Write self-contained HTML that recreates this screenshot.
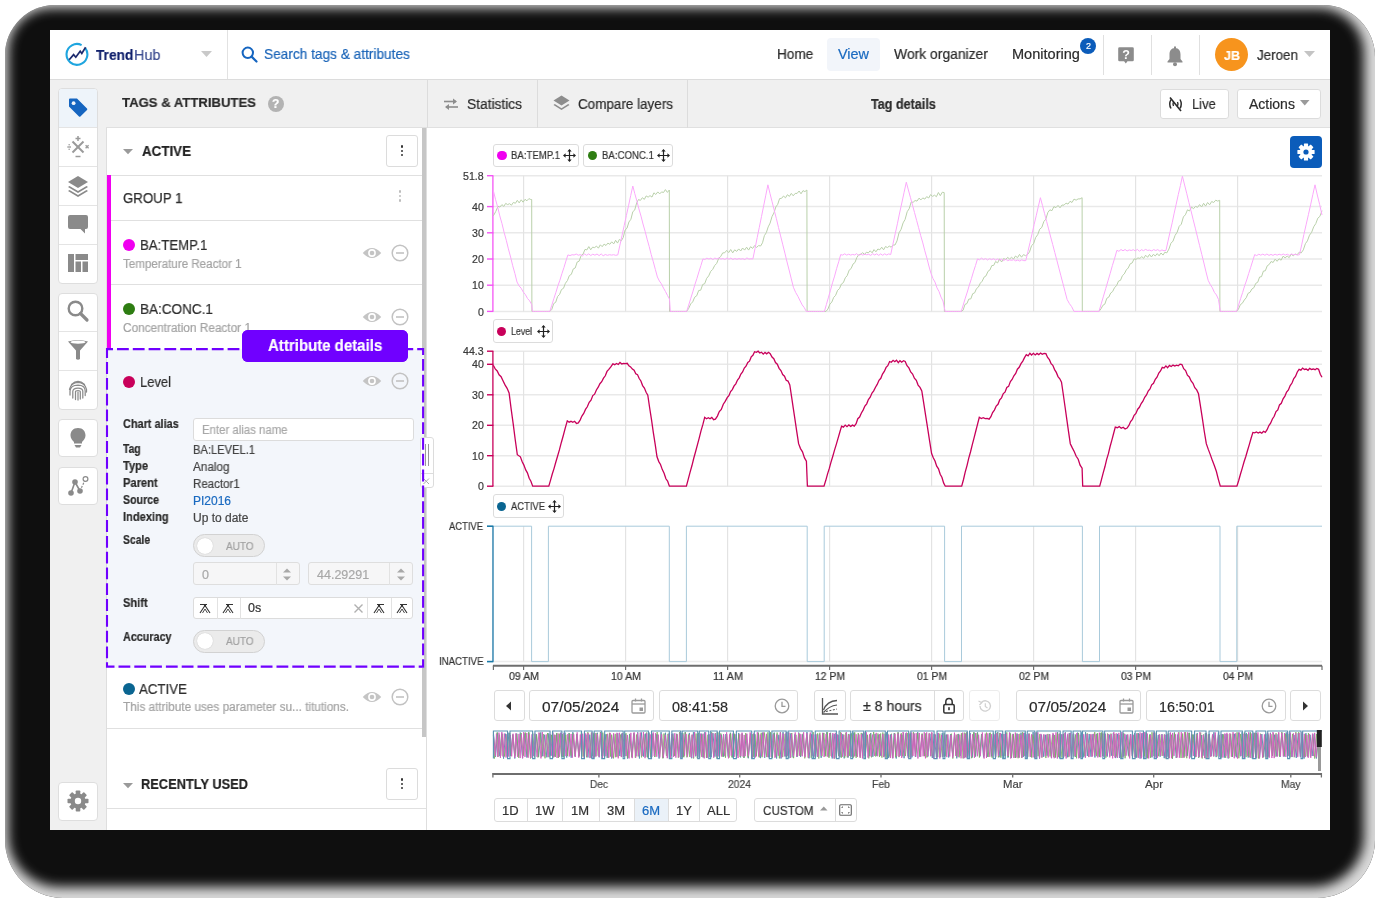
<!DOCTYPE html><html><head><meta charset="utf-8"><style>
html,body{margin:0;padding:0;}
body{width:1380px;height:900px;position:relative;overflow:hidden;background:#fff;font-family:"Liberation Sans",sans-serif;}
.a{position:absolute;box-sizing:border-box;}
.t{position:absolute;white-space:nowrap;transform-origin:0 0;-webkit-text-stroke:0.2px currentColor;will-change:transform;}
</style></head><body>
<div class="a" style="left:5px;top:4.5px;width:1370.2px;height:893px;border-radius:50px 52px 58px 58px;background:#0f0f0f;box-shadow:inset -4px -4px 12px 7px rgba(255,255,255,0.85);"></div>
<div class="a" style="left:50px;top:30px;width:1280px;height:800px;background:#fff;"></div>
<div class="a" style="left:50px;top:79px;width:1280px;height:1px;background:#dcdcdc;"></div>
<div class="a" style="left:227px;top:30px;width:1px;height:49px;background:#e2e2e2;"></div>
<svg class="a" style="left:64px;top:42px;" width="26" height="26" viewBox="0 0 26 26"><path d="M21.3 6.2 A10.4 10.4 0 1 1 17.6 3.1" fill="none" stroke="#1ea5df" stroke-width="2.1"/><polyline points="5.2,17.8 9.6,12.6 11.8,15.2 16.2,9.2 17.8,11.4 21.6,5.2" fill="none" stroke="#1c2a6e" stroke-width="1.7" stroke-linejoin="miter"/></svg>
<div class="t" style="left:95.50px;top:47.18px;font-size:15.5px;line-height:15.5px;color:#0f1f6b;font-weight:bold;transform:scaleX(0.8838);">Trend</div>
<div class="t" style="left:133.50px;top:47.18px;font-size:15.5px;line-height:15.5px;color:#3a4a8f;transform:scaleX(0.9319);">Hub</div>
<svg class="a" style="left:201px;top:51px;" width="12" height="7" viewBox="0 0 12 7"><polygon points="0,0 11,0 5.5,6" fill="#c9c9c9"/></svg>
<svg class="a" style="left:241px;top:46px;" width="18" height="18" viewBox="0 0 18 18"><circle cx="6.8" cy="6.8" r="5.2" fill="none" stroke="#1565c0" stroke-width="2"/><line x1="10.6" y1="10.6" x2="15.5" y2="15.5" stroke="#1565c0" stroke-width="2.2" stroke-linecap="round"/></svg>
<div class="t" style="left:264.00px;top:47.18px;font-size:14.2px;line-height:14.2px;color:#1a64b8;transform:scaleX(0.9634);">Search tags &amp; attributes</div>
<div class="t" style="left:777.40px;top:46.98px;font-size:14.2px;line-height:14.2px;color:#2b2b2b;transform:scaleX(0.9557);">Home</div>
<div class="a" style="left:827px;top:38px;width:53px;height:33px;background:#f2f5fa;border-radius:4px;"></div>
<div class="t" style="left:838.30px;top:46.98px;font-size:14.2px;line-height:14.2px;color:#1a6ac0;transform:scaleX(1.0156);">View</div>
<div class="t" style="left:893.60px;top:46.98px;font-size:14.2px;line-height:14.2px;color:#2b2b2b;transform:scaleX(0.9790);">Work organizer</div>
<div class="t" style="left:1012.00px;top:46.98px;font-size:14.2px;line-height:14.2px;color:#2b2b2b;transform:scaleX(1.0256);">Monitoring</div>
<div class="a" style="left:1080px;top:38px;width:16px;height:16px;background:#0b5cba;border-radius:50%;"></div>
<div class="t" style="left:1085.50px;top:42.38px;font-size:9px;line-height:9px;color:#fff;">2</div>
<div class="a" style="left:1103px;top:35px;width:1px;height:40px;background:#e0e0e0;"></div>
<div class="a" style="left:1151px;top:35px;width:1px;height:40px;background:#e0e0e0;"></div>
<div class="a" style="left:1199px;top:35px;width:1px;height:40px;background:#e0e0e0;"></div>
<svg class="a" style="left:1117px;top:46px;" width="18" height="20" viewBox="0 0 18 20"><path d="M2.5 1.2 H15.5 Q16.8 1.2 16.8 2.5 V14 Q16.8 15.3 15.5 15.3 H10.5 L8.8 17.6 L7.1 15.3 H2.5 Q1.2 15.3 1.2 14 V2.5 Q1.2 1.2 2.5 1.2 Z" fill="#8c8c8c"/><text x="9" y="13" font-family="Liberation Sans" font-weight="bold" font-size="12.5" fill="#fff" text-anchor="middle">?</text></svg>
<svg class="a" style="left:1165px;top:45.5px;" width="20" height="21" viewBox="0 0 20 21"><path d="M10 2 C6 2 4.5 5 4.5 8.5 V13 L2.5 15.5 V16.5 H17.5 V15.5 L15.5 13 V8.5 C15.5 5 14 2 10 2 Z" fill="#8c8c8c"/><circle cx="10" cy="18.3" r="2" fill="#8c8c8c"/><rect x="9" y="0.5" width="2" height="2.5" fill="#8c8c8c"/></svg>
<div class="a" style="left:1215px;top:38px;width:33px;height:33px;background:#f7941d;border-radius:50%;"></div>
<div class="t" style="left:1223.50px;top:48.57px;font-size:13.5px;line-height:13.5px;color:#fff;font-weight:bold;transform:scaleX(0.9271);">JB</div>
<div class="t" style="left:1257.00px;top:48.28px;font-size:14.2px;line-height:14.2px;color:#2b2b2b;transform:scaleX(0.9443);">Jeroen</div>
<svg class="a" style="left:1304px;top:51px;" width="12" height="7" viewBox="0 0 12 7"><polygon points="0,0 11,0 5.5,6" fill="#c4c4c4"/></svg>
<div class="a" style="left:50px;top:80px;width:1280px;height:750px;background:#f0f0f0;"></div>
<div class="a" style="left:106px;top:127px;width:1224px;height:1px;background:#e0e0e0;"></div>
<div class="a" style="left:58px;top:88px;width:39.5px;height:195.5px;background:#fff;border:1px solid #dedede;border-radius:4px;"></div>
<div class="a" style="left:59px;top:89px;width:37.5px;height:38px;background:#eef4fa;border-radius:3px 3px 0 0;"></div>
<div class="a" style="left:59px;top:127px;width:38px;height:1px;background:#e4e4e4;"></div>
<div class="a" style="left:59px;top:166px;width:38px;height:1px;background:#e4e4e4;"></div>
<div class="a" style="left:59px;top:205px;width:38px;height:1px;background:#e4e4e4;"></div>
<div class="a" style="left:59px;top:244px;width:38px;height:1px;background:#e4e4e4;"></div>
<div class="a" style="left:58px;top:292.5px;width:39.5px;height:117px;background:#fff;border:1px solid #dedede;border-radius:4px;"></div>
<div class="a" style="left:59px;top:331px;width:38px;height:1px;background:#e4e4e4;"></div>
<div class="a" style="left:59px;top:370px;width:38px;height:1px;background:#e4e4e4;"></div>
<div class="a" style="left:58px;top:418.7px;width:39.5px;height:38.8px;background:#fff;border:1px solid #dedede;border-radius:4px;"></div>
<div class="a" style="left:58px;top:466.7px;width:39.5px;height:38.8px;background:#fff;border:1px solid #dedede;border-radius:4px;"></div>
<div class="a" style="left:58px;top:782.2px;width:39.5px;height:38.4px;background:#fff;border:1px solid #dedede;border-radius:4px;"></div>
<svg class="a" style="left:66px;top:96px;" width="24" height="24" viewBox="0 0 24 24"><path d="M3 3.5 Q3 2.5 4 2.5 H11 L21 12.5 Q21.7 13.2 21 13.9 L14.4 20.5 Q13.7 21.2 13 20.5 L3 10.5 Z" fill="#1565c0"/><circle cx="7.6" cy="7.2" r="1.9" fill="#eef4fa"/></svg>
<svg class="a" style="left:66px;top:135px;" width="24" height="24" viewBox="0 0 24 24"><line x1="6.5" y1="6.5" x2="17.5" y2="17.5" stroke="#9a9a9a" stroke-width="2"/><line x1="17.5" y1="6.5" x2="6.5" y2="17.5" stroke="#9a9a9a" stroke-width="2"/><path d="M12 1 V6 M9.5 3.5 H14.5" stroke="#9a9a9a" stroke-width="1.5"/><path d="M9.5 21.5 H14.5" stroke="#9a9a9a" stroke-width="1.5"/><path d="M1.3 12 H5" stroke="#9a9a9a" stroke-width="1.3"/><circle cx="3.15" cy="9.7" r="0.8" fill="#9a9a9a"/><circle cx="3.15" cy="14.3" r="0.8" fill="#9a9a9a"/><path d="M19.6 10.3 L22.6 13.3 M22.6 10.3 L19.6 13.3" stroke="#9a9a9a" stroke-width="1.3"/></svg>
<svg class="a" style="left:66px;top:174px;" width="24" height="24" viewBox="0 0 24 24"><path d="M12 2 L22 8 L12 14 L2 8 Z" fill="#8a8a8a"/><path d="M3.5 12 L2 13 L12 19 L22 13 L20.5 12 L12 17 Z" fill="#8a8a8a"/><path d="M3.5 16 L2 17 L12 23 L22 17 L20.5 16 L12 21 Z" fill="#8a8a8a"/></svg>
<svg class="a" style="left:66px;top:212px;" width="24" height="24" viewBox="0 0 24 24"><path d="M4 3 H20 Q22 3 22 5 V15 Q22 17 20 17 H19 V21.5 L14.5 17 H4 Q2 17 2 15 V5 Q2 3 4 3 Z" fill="#8a8a8a"/></svg>
<svg class="a" style="left:66px;top:251px;" width="24" height="24" viewBox="0 0 24 24"><rect x="2" y="3" width="6" height="18" fill="#8a8a8a"/><rect x="9.5" y="3" width="12.5" height="6" fill="#8a8a8a"/><rect x="9.5" y="10.5" width="5.5" height="10.5" fill="#8a8a8a"/><rect x="16.5" y="10.5" width="5.5" height="10.5" fill="#8a8a8a"/></svg>
<svg class="a" style="left:66px;top:299px;" width="24" height="24" viewBox="0 0 24 24"><circle cx="9.5" cy="9.5" r="6.8" fill="none" stroke="#8a8a8a" stroke-width="2.4"/><line x1="14.5" y1="14.5" x2="21" y2="21" stroke="#8a8a8a" stroke-width="3.2" stroke-linecap="round"/></svg>
<svg class="a" style="left:66px;top:338px;" width="24" height="24" viewBox="0 0 24 24"><path d="M2 3.5 Q12 0.5 22 3.5 L14 12.5 V21 Q12 22.5 10 21 V12.5 Z" fill="#8a8a8a"/><ellipse cx="12" cy="4.2" rx="7.5" ry="1.6" fill="#fff"/></svg>
<svg class="a" style="left:66px;top:378px;" width="24" height="24" viewBox="0 0 24 24"><path d="M5.5 6.5 Q12 0.5 18.5 6.5" fill="none" stroke="#8a8a8a" stroke-width="1.25" stroke-linecap="round"/><path d="M3.5 11.5 Q5 4.5 12 4.3 Q19 4.5 20.5 11.5 V14" fill="none" stroke="#8a8a8a" stroke-width="1.25" stroke-linecap="round"/><path d="M4 17 V13 Q4.5 7.3 12 7.2 Q19.3 7.3 19.2 13 V17.5" fill="none" stroke="#8a8a8a" stroke-width="1.25" stroke-linecap="round"/><path d="M6.8 20 V13.2 Q7 10 12 10 Q16.8 10 16.8 13.2 V20" fill="none" stroke="#8a8a8a" stroke-width="1.25" stroke-linecap="round"/><path d="M9.5 21.5 V13.5 Q9.5 12.5 12 12.5 Q14.3 12.5 14.3 13.5 V21" fill="none" stroke="#8a8a8a" stroke-width="1.25" stroke-linecap="round"/><path d="M12 14 V22" fill="none" stroke="#8a8a8a" stroke-width="1.25" stroke-linecap="round"/></svg>
<svg class="a" style="left:66px;top:426px;" width="24" height="24" viewBox="0 0 24 24"><path d="M12 2 C7 2 4.5 5.5 4.5 9.5 C4.5 12.5 6.5 14.5 8 16 V17.5 H16 V16 C17.5 14.5 19.5 12.5 19.5 9.5 C19.5 5.5 17 2 12 2 Z" fill="#8a8a8a"/><path d="M8.5 19 H15.5 L14 21.5 H10 Z" fill="#8a8a8a"/></svg>
<svg class="a" style="left:66px;top:474px;" width="24" height="24" viewBox="0 0 24 24"><line x1="5" y1="19" x2="9" y2="8" stroke="#8a8a8a" stroke-width="1.6"/><line x1="9" y1="8" x2="14" y2="17" stroke="#8a8a8a" stroke-width="1.6"/><line x1="14" y1="17" x2="19" y2="6" stroke="#8a8a8a" stroke-width="1.2" stroke-dasharray="2 1.5"/><circle cx="5" cy="19" r="2.8" fill="#8a8a8a"/><circle cx="9" cy="8" r="2.8" fill="#8a8a8a"/><circle cx="14" cy="17" r="2.8" fill="#8a8a8a"/><circle cx="19.5" cy="5" r="2.4" fill="#fff" stroke="#8a8a8a" stroke-width="1.2"/></svg>
<svg class="a" style="left:66px;top:789px;" width="24" height="24" viewBox="0 0 24 24"><g transform="translate(12 12)"><rect x="-2.3" y="-10.5" width="4.6" height="5" rx="0.8" fill="#8a8a8a" transform="rotate(0)"/><rect x="-2.3" y="-10.5" width="4.6" height="5" rx="0.8" fill="#8a8a8a" transform="rotate(45)"/><rect x="-2.3" y="-10.5" width="4.6" height="5" rx="0.8" fill="#8a8a8a" transform="rotate(90)"/><rect x="-2.3" y="-10.5" width="4.6" height="5" rx="0.8" fill="#8a8a8a" transform="rotate(135)"/><rect x="-2.3" y="-10.5" width="4.6" height="5" rx="0.8" fill="#8a8a8a" transform="rotate(180)"/><rect x="-2.3" y="-10.5" width="4.6" height="5" rx="0.8" fill="#8a8a8a" transform="rotate(225)"/><rect x="-2.3" y="-10.5" width="4.6" height="5" rx="0.8" fill="#8a8a8a" transform="rotate(270)"/><rect x="-2.3" y="-10.5" width="4.6" height="5" rx="0.8" fill="#8a8a8a" transform="rotate(315)"/><circle r="7.6" fill="#8a8a8a"/><circle r="3.2" fill="#fff"/></g></svg>
<div class="t" style="left:122.40px;top:96.44px;font-size:13.3px;line-height:13.3px;color:#2a2a2a;font-weight:bold;transform:scaleX(0.9874);">TAGS &amp; ATTRIBUTES</div>
<div class="a" style="left:267.5px;top:96px;width:16px;height:16px;background:#b3b3b3;border-radius:50%;"></div>
<div class="t" style="left:271.83px;top:98.24px;font-size:12px;line-height:12px;color:#fff;font-weight:bold;">?</div>
<div class="a" style="left:106px;top:127.5px;width:321px;height:702.5px;background:#fff;border-left:1px solid #dedede;border-right:1px solid #dedede;"></div>
<div class="a" style="left:422px;top:128px;width:4px;height:609px;background:#c6c6c6;"></div>
<div class="a" style="left:426.5px;top:80px;width:1px;height:48px;background:#dcdcdc;"></div>
<div class="a" style="left:537px;top:80px;width:1px;height:48px;background:#dcdcdc;"></div>
<div class="a" style="left:687px;top:80px;width:1px;height:48px;background:#dcdcdc;"></div>
<svg class="a" style="left:442px;top:96px;" width="18" height="16" viewBox="0 0 18 16"><path d="M2 5.5 H14" stroke="#8d8d8d" stroke-width="1.6"/><path d="M11 2.5 L15 5.5 L11 8.5 Z" fill="#8d8d8d"/><path d="M16 11 H4" stroke="#8d8d8d" stroke-width="1.6"/><path d="M7 8 L3 11 L7 14 Z" fill="#8d8d8d"/></svg>
<div class="t" style="left:467.30px;top:97.15px;font-size:14px;line-height:14px;color:#2b2b2b;transform:scaleX(0.9819);">Statistics</div>
<svg class="a" style="left:552px;top:94px;" width="19" height="19" viewBox="0 0 19 19"><path d="M9.5 1.5 L17.5 6.5 L9.5 11.5 L1.5 6.5 Z" fill="#8d8d8d"/><path d="M2.8 10 L1.5 11 L9.5 16 L17.5 11 L16.2 10 L9.5 14.2 Z" fill="#8d8d8d"/></svg>
<div class="t" style="left:577.90px;top:97.15px;font-size:14px;line-height:14px;color:#2b2b2b;transform:scaleX(0.9614);">Compare layers</div>
<div class="t" style="left:870.60px;top:96.75px;font-size:14px;line-height:14px;color:#2b2b2b;font-weight:bold;transform:scaleX(0.8988);">Tag details</div>
<div class="a" style="left:1159.7px;top:88.8px;width:69.5px;height:30.5px;background:#fff;border:1px solid #dcdcdc;border-radius:3px;"></div>
<svg class="a" style="left:1167px;top:96px;" width="17" height="17" viewBox="0 0 17 17"><path d="M4 3.5 Q1.5 8 4 12.5" fill="none" stroke="#2b2b2b" stroke-width="1.5"/><path d="M13 3.5 Q15.5 8 13 12.5" fill="none" stroke="#2b2b2b" stroke-width="1.5"/><path d="M6.5 6 Q5.5 8 6.5 10" fill="none" stroke="#2b2b2b" stroke-width="1.4"/><path d="M10.5 6 Q11.5 8 10.5 10" fill="none" stroke="#2b2b2b" stroke-width="1.4"/><line x1="3" y1="1.5" x2="14" y2="15" stroke="#2b2b2b" stroke-width="1.6"/></svg>
<div class="t" style="left:1192.30px;top:96.85px;font-size:14px;line-height:14px;color:#2b2b2b;transform:scaleX(0.9228);">Live</div>
<div class="a" style="left:1236.8px;top:88.8px;width:84.4px;height:30.5px;background:#fff;border:1px solid #dcdcdc;border-radius:3px;"></div>
<div class="t" style="left:1248.80px;top:96.85px;font-size:14px;line-height:14px;color:#2b2b2b;">Actions</div>
<svg class="a" style="left:1300px;top:100px;" width="10" height="7" viewBox="0 0 10 7"><polygon points="0,0 9.5,0 4.75,5.5" fill="#9a9a9a"/></svg>
<div class="a" style="left:427px;top:128px;width:903px;height:702px;background:#fff;"></div>
<div class="a" style="left:1290px;top:136px;width:31.7px;height:31.5px;background:#0b5cba;border-radius:4px;"></div>
<svg class="a" style="left:1290px;top:136px;" width="32" height="32" viewBox="0 0 32 32"><g transform="translate(16 16)"><rect x="-2.1" y="-8.6" width="4.2" height="4.5" rx="0.6" fill="#fff" transform="rotate(0)"/><rect x="-2.1" y="-8.6" width="4.2" height="4.5" rx="0.6" fill="#fff" transform="rotate(45)"/><rect x="-2.1" y="-8.6" width="4.2" height="4.5" rx="0.6" fill="#fff" transform="rotate(90)"/><rect x="-2.1" y="-8.6" width="4.2" height="4.5" rx="0.6" fill="#fff" transform="rotate(135)"/><rect x="-2.1" y="-8.6" width="4.2" height="4.5" rx="0.6" fill="#fff" transform="rotate(180)"/><rect x="-2.1" y="-8.6" width="4.2" height="4.5" rx="0.6" fill="#fff" transform="rotate(225)"/><rect x="-2.1" y="-8.6" width="4.2" height="4.5" rx="0.6" fill="#fff" transform="rotate(270)"/><rect x="-2.1" y="-8.6" width="4.2" height="4.5" rx="0.6" fill="#fff" transform="rotate(315)"/><circle r="6.2" fill="#fff"/><circle r="2.6" fill="#0b5cba"/></g></svg>
<svg class="a" style="left:123px;top:149px;" width="11" height="6" viewBox="0 0 11 6"><polygon points="0,0 10,0 5,5.2" fill="#9a9a9a"/></svg>
<div class="t" style="left:141.50px;top:144.00px;font-size:14.3px;line-height:14.3px;color:#232323;font-weight:bold;transform:scaleX(0.9344);">ACTIVE</div>
<div class="a" style="left:386.3px;top:135.2px;width:31.5px;height:31.5px;background:#fff;border:1px solid #dcdcdc;border-radius:3px;"></div>
<div class="a" style="left:400.6px;top:145.1px;width:2.6px;height:2.6px;background:#333;border-radius:50%;"></div>
<div class="a" style="left:400.6px;top:149.5px;width:2.6px;height:2.6px;background:#333;border-radius:50%;"></div>
<div class="a" style="left:400.6px;top:153.9px;width:2.6px;height:2.6px;background:#333;border-radius:50%;"></div>
<div class="a" style="left:107px;top:174.5px;width:315px;height:1px;background:#e0e0e0;"></div>
<div class="a" style="left:107px;top:175px;width:3.8px;height:173px;background:#f000f0;"></div>
<div class="t" style="left:123.10px;top:191.00px;font-size:14.3px;line-height:14.3px;color:#2d2d2d;transform:scaleX(0.9266);font-weight:500;-webkit-text-stroke:0.25px #2d2d2d;">GROUP 1</div>
<div class="a" style="left:398.7px;top:190.3px;width:2.6px;height:2.6px;background:#bdbdbd;border-radius:50%;"></div>
<div class="a" style="left:398.7px;top:194.8px;width:2.6px;height:2.6px;background:#bdbdbd;border-radius:50%;"></div>
<div class="a" style="left:398.7px;top:199.3px;width:2.6px;height:2.6px;background:#bdbdbd;border-radius:50%;"></div>
<div class="a" style="left:111px;top:220px;width:311px;height:1px;background:#e0e0e0;"></div>
<div class="a" style="left:122.7px;top:238.9px;width:12px;height:12px;background:#f000f0;border-radius:50%;"></div>
<div class="t" style="left:139.50px;top:238.20px;font-size:14.3px;line-height:14.3px;color:#2d2d2d;transform:scaleX(0.9237);">BA:TEMP.1</div>
<div class="t" style="left:123.10px;top:257.74px;font-size:12px;line-height:12px;color:#a3a3a3;transform:scaleX(0.9664);">Temperature Reactor 1</div>
<svg class="a" style="left:362px;top:245.8px;" width="20" height="14" viewBox="0 0 20 14"><path d="M0.8 7 Q10 -3.2 19.2 7 Q10 17.2 0.8 7 Z" fill="#c4c4c4"/><circle cx="10" cy="7" r="3.9" fill="#fff"/><circle cx="10" cy="7" r="2.3" fill="#c4c4c4"/></svg>
<svg class="a" style="left:390.9px;top:243.8px;" width="18" height="18" viewBox="0 0 18 18"><circle cx="9" cy="9" r="7.8" fill="none" stroke="#c2c2c2" stroke-width="1.5"/><line x1="5" y1="9" x2="13" y2="9" stroke="#c2c2c2" stroke-width="1.6"/></svg>
<div class="a" style="left:111px;top:284px;width:311px;height:1px;background:#e0e0e0;"></div>
<div class="a" style="left:122.7px;top:303px;width:12px;height:12px;background:#2e7d12;border-radius:50%;"></div>
<div class="t" style="left:139.50px;top:302.30px;font-size:14.3px;line-height:14.3px;color:#2d2d2d;transform:scaleX(0.9471);">BA:CONC.1</div>
<div class="t" style="left:123.10px;top:321.54px;font-size:12px;line-height:12px;color:#a3a3a3;transform:scaleX(0.9840);">Concentration Reactor 1</div>
<svg class="a" style="left:362px;top:309.8px;" width="20" height="14" viewBox="0 0 20 14"><path d="M0.8 7 Q10 -3.2 19.2 7 Q10 17.2 0.8 7 Z" fill="#c4c4c4"/><circle cx="10" cy="7" r="3.9" fill="#fff"/><circle cx="10" cy="7" r="2.3" fill="#c4c4c4"/></svg>
<svg class="a" style="left:390.9px;top:307.8px;" width="18" height="18" viewBox="0 0 18 18"><circle cx="9" cy="9" r="7.8" fill="none" stroke="#c2c2c2" stroke-width="1.5"/><line x1="5" y1="9" x2="13" y2="9" stroke="#c2c2c2" stroke-width="1.6"/></svg>
<div class="a" style="left:106.5px;top:348.5px;width:317.5px;height:319.5px;background:#f3f6fb;"></div>
<div class="a" style="left:241.8px;top:329.8px;width:166.2px;height:32.2px;background:#7000ff;border-radius:6px;"></div>
<div class="t" style="left:268.00px;top:338.46px;font-size:16px;line-height:16px;color:#fff;font-weight:bold;transform:scaleX(0.9377);">Attribute details</div>
<div class="a" style="left:122.9px;top:375.9px;width:12px;height:12px;background:#c8005a;border-radius:50%;"></div>
<div class="t" style="left:139.50px;top:374.60px;font-size:14.3px;line-height:14.3px;color:#2d2d2d;transform:scaleX(0.9068);">Level</div>
<svg class="a" style="left:361.9px;top:374.2px;" width="20" height="14" viewBox="0 0 20 14"><path d="M0.8 7 Q10 -3.2 19.2 7 Q10 17.2 0.8 7 Z" fill="#c4c4c4"/><circle cx="10" cy="7" r="3.9" fill="#fff"/><circle cx="10" cy="7" r="2.3" fill="#c4c4c4"/></svg>
<svg class="a" style="left:390.9px;top:372.2px;" width="18" height="18" viewBox="0 0 18 18"><circle cx="9" cy="9" r="7.8" fill="none" stroke="#c2c2c2" stroke-width="1.5"/><line x1="5" y1="9" x2="13" y2="9" stroke="#c2c2c2" stroke-width="1.6"/></svg>
<div class="t" style="left:123.20px;top:418.34px;font-size:12px;line-height:12px;color:#2a2a2a;font-weight:bold;transform:scaleX(0.9078);">Chart alias</div>
<div class="a" style="left:193.3px;top:417.5px;width:220.4px;height:23px;background:#fff;border:1px solid #dcdcdc;border-radius:3px;"></div>
<div class="t" style="left:202.30px;top:423.64px;font-size:12px;line-height:12px;color:#a8a8a8;transform:scaleX(0.9495);">Enter alias name</div>
<div class="t" style="left:123.40px;top:443.44px;font-size:12px;line-height:12px;color:#2a2a2a;font-weight:bold;transform:scaleX(0.8658);">Tag</div>
<div class="t" style="left:193.10px;top:443.84px;font-size:12px;line-height:12px;color:#444;transform:scaleX(0.9294);">BA:LEVEL.1</div>
<div class="t" style="left:123.40px;top:460.44px;font-size:12px;line-height:12px;color:#2a2a2a;font-weight:bold;transform:scaleX(0.9256);">Type</div>
<div class="t" style="left:193.10px;top:460.84px;font-size:12px;line-height:12px;color:#444;transform:scaleX(0.9768);">Analog</div>
<div class="t" style="left:123.40px;top:477.44px;font-size:12px;line-height:12px;color:#2a2a2a;font-weight:bold;transform:scaleX(0.9291);">Parent</div>
<div class="t" style="left:193.10px;top:477.84px;font-size:12px;line-height:12px;color:#444;transform:scaleX(0.9611);">Reactor1</div>
<div class="t" style="left:123.40px;top:494.44px;font-size:12px;line-height:12px;color:#2a2a2a;font-weight:bold;transform:scaleX(0.8849);">Source</div>
<div class="t" style="left:193.10px;top:494.84px;font-size:12px;line-height:12px;color:#1a6ac0;">PI2016</div>
<div class="t" style="left:123.40px;top:511.44px;font-size:12px;line-height:12px;color:#2a2a2a;font-weight:bold;transform:scaleX(0.9243);">Indexing</div>
<div class="t" style="left:193.10px;top:511.84px;font-size:12px;line-height:12px;color:#444;">Up to date</div>
<div class="t" style="left:123.40px;top:534.44px;font-size:12px;line-height:12px;color:#2a2a2a;font-weight:bold;transform:scaleX(0.8641);">Scale</div>
<div class="a" style="left:193.1px;top:534.3px;width:71.5px;height:23.1px;background:#ebebeb;border:1px solid #d2d2d2;border-radius:12px;"></div>
<div class="a" style="left:196.6px;top:537.5px;width:16.7px;height:16.7px;background:#fff;border-radius:50%;box-shadow:0 0 1px rgba(0,0,0,0.25);"></div>
<div class="t" style="left:226.40px;top:540.99px;font-size:11px;line-height:11px;color:#a0a0a0;transform:scaleX(0.9091);">AUTO</div>
<div class="a" style="left:193.1px;top:562.4px;width:106.5px;height:23.1px;background:#f6f6f7;border:1px solid #dedede;border-radius:3px;"></div>
<div class="a" style="left:275.6px;top:563px;width:1px;height:22px;background:#e2e2e2;"></div>
<svg class="a" style="left:282.3px;top:567.5px;" width="10" height="13" viewBox="0 0 10 13"><polygon points="0,4.5 8,4.5 4,0.5" fill="#a8a8a8" transform="translate(1 0)"/><polygon points="0,8.5 8,8.5 4,12.5" fill="#a8a8a8" transform="translate(1 0)"/></svg>
<div class="t" style="left:201.70px;top:568.52px;font-size:12.5px;line-height:12.5px;color:#a8a8a8;">0</div>
<div class="a" style="left:308.4px;top:562.4px;width:105px;height:23.1px;background:#f6f6f7;border:1px solid #dedede;border-radius:3px;"></div>
<div class="a" style="left:389.4px;top:563px;width:1px;height:22px;background:#e2e2e2;"></div>
<svg class="a" style="left:396.09999999999997px;top:567.5px;" width="10" height="13" viewBox="0 0 10 13"><polygon points="0,4.5 8,4.5 4,0.5" fill="#a8a8a8" transform="translate(1 0)"/><polygon points="0,8.5 8,8.5 4,12.5" fill="#a8a8a8" transform="translate(1 0)"/></svg>
<div class="t" style="left:317.00px;top:568.52px;font-size:12.5px;line-height:12.5px;color:#a8a8a8;">44.29291</div>
<div class="t" style="left:123.40px;top:596.54px;font-size:12px;line-height:12px;color:#2a2a2a;font-weight:bold;transform:scaleX(0.9227);">Shift</div>
<div class="a" style="left:193.1px;top:596.9px;width:220.3px;height:22.6px;background:#fff;border:1px solid #dcdcdc;border-radius:3px;"></div>
<div class="a" style="left:216.5px;top:597.5px;width:1px;height:21.5px;background:#e2e2e2;"></div>
<div class="a" style="left:239.7px;top:597.5px;width:1px;height:21.5px;background:#e2e2e2;"></div>
<div class="a" style="left:367.3px;top:597.5px;width:1px;height:21.5px;background:#e2e2e2;"></div>
<div class="a" style="left:390.7px;top:597.5px;width:1px;height:21.5px;background:#e2e2e2;"></div>
<svg class="a" style="left:197.8px;top:602px;" width="14" height="12" viewBox="0 0 14 12"><path d="M2 11 L7 3.5 L12 11" fill="none" stroke="#333" stroke-width="1.1"/><path d="M4.5 11 L7 7 L9.5 11" fill="none" stroke="#333" stroke-width="0.9"/><circle cx="7" cy="3.5" r="1.1" fill="#333"/><path d="M2 2.5 H9" stroke="#333" stroke-width="1"/></svg>
<svg class="a" style="left:221.1px;top:602px;" width="14" height="12" viewBox="0 0 14 12"><path d="M2 11 L7 3.5 L12 11" fill="none" stroke="#333" stroke-width="1.1"/><path d="M4.5 11 L7 7 L9.5 11" fill="none" stroke="#333" stroke-width="0.9"/><circle cx="7" cy="3.5" r="1.1" fill="#333"/><path d="M5 2.5 H12" stroke="#333" stroke-width="1"/></svg>
<svg class="a" style="left:372px;top:602px;" width="14" height="12" viewBox="0 0 14 12"><path d="M2 11 L7 3.5 L12 11" fill="none" stroke="#333" stroke-width="1.1"/><path d="M4.5 11 L7 7 L9.5 11" fill="none" stroke="#333" stroke-width="0.9"/><circle cx="7" cy="3.5" r="1.1" fill="#333"/><path d="M5 2.5 H12" stroke="#333" stroke-width="1"/></svg>
<svg class="a" style="left:395px;top:602px;" width="14" height="12" viewBox="0 0 14 12"><path d="M2 11 L7 3.5 L12 11" fill="none" stroke="#333" stroke-width="1.1"/><path d="M4.5 11 L7 7 L9.5 11" fill="none" stroke="#333" stroke-width="0.9"/><circle cx="7" cy="3.5" r="1.1" fill="#333"/><path d="M5 2.5 H12" stroke="#333" stroke-width="1"/></svg>
<div class="t" style="left:247.80px;top:602.32px;font-size:12.5px;line-height:12.5px;color:#333;">0s</div>
<svg class="a" style="left:353px;top:603px;" width="11" height="11" viewBox="0 0 11 11"><path d="M1.5 1.5 L9.5 9.5 M9.5 1.5 L1.5 9.5" stroke="#b0b0b0" stroke-width="1.4"/></svg>
<div class="t" style="left:123.40px;top:630.54px;font-size:12px;line-height:12px;color:#2a2a2a;font-weight:bold;transform:scaleX(0.8975);">Accuracy</div>
<div class="a" style="left:193.1px;top:629.6px;width:71.5px;height:23.1px;background:#ebebeb;border:1px solid #d2d2d2;border-radius:12px;"></div>
<div class="a" style="left:196.6px;top:632.8000000000001px;width:16.7px;height:16.7px;background:#fff;border-radius:50%;box-shadow:0 0 1px rgba(0,0,0,0.25);"></div>
<div class="t" style="left:226.40px;top:636.29px;font-size:11px;line-height:11px;color:#a0a0a0;transform:scaleX(0.9091);">AUTO</div>
<div class="a" style="left:122.8px;top:683px;width:12px;height:12px;background:#0a6591;border-radius:50%;"></div>
<div class="t" style="left:139.40px;top:681.80px;font-size:14.3px;line-height:14.3px;color:#2d2d2d;transform:scaleX(0.9293);">ACTIVE</div>
<div class="t" style="left:123.40px;top:700.74px;font-size:12px;line-height:12px;color:#a3a3a3;transform:scaleX(0.9822);">This attribute uses parameter su... titutions.</div>
<svg class="a" style="left:361.7px;top:689.6px;" width="20" height="14" viewBox="0 0 20 14"><path d="M0.8 7 Q10 -3.2 19.2 7 Q10 17.2 0.8 7 Z" fill="#c4c4c4"/><circle cx="10" cy="7" r="3.9" fill="#fff"/><circle cx="10" cy="7" r="2.3" fill="#c4c4c4"/></svg>
<svg class="a" style="left:390.8px;top:687.6px;" width="18" height="18" viewBox="0 0 18 18"><circle cx="9" cy="9" r="7.8" fill="none" stroke="#c2c2c2" stroke-width="1.5"/><line x1="5" y1="9" x2="13" y2="9" stroke="#c2c2c2" stroke-width="1.6"/></svg>
<div class="a" style="left:107px;top:728px;width:315px;height:1px;background:#e0e0e0;"></div>
<svg class="a" style="left:123px;top:783px;" width="11" height="6" viewBox="0 0 11 6"><polygon points="0,0 10,0 5,5.2" fill="#9a9a9a"/></svg>
<div class="t" style="left:141.40px;top:776.60px;font-size:14.3px;line-height:14.3px;color:#232323;font-weight:bold;transform:scaleX(0.8976);">RECENTLY USED</div>
<div class="a" style="left:386.3px;top:768.2px;width:31.5px;height:31.5px;background:#fff;border:1px solid #dcdcdc;border-radius:3px;"></div>
<div class="a" style="left:400.6px;top:778.1px;width:2.6px;height:2.6px;background:#333;border-radius:50%;"></div>
<div class="a" style="left:400.6px;top:782.5px;width:2.6px;height:2.6px;background:#333;border-radius:50%;"></div>
<div class="a" style="left:400.6px;top:786.9px;width:2.6px;height:2.6px;background:#333;border-radius:50%;"></div>
<div class="a" style="left:107px;top:807.5px;width:319px;height:1px;background:#e0e0e0;"></div>
<div class="a" style="left:419.7px;top:437.3px;width:14.5px;height:51.1px;background:#fff;border:1px solid #dcdcdc;border-radius:3px;"></div>
<div class="a" style="left:425px;top:444px;width:1px;height:22px;background:#999;"></div>
<div class="a" style="left:428.3px;top:444px;width:1px;height:22px;background:#999;"></div>
<div class="a" style="left:420px;top:473px;width:14px;height:1px;background:#dcdcdc;"></div>
<svg class="a" style="left:422px;top:477px;" width="9" height="9" viewBox="0 0 9 9"><path d="M1.5 1.5 L7 7 M7 1.5 L1.5 7" stroke="#aaa" stroke-width="1"/></svg>
<svg class="a" style="left:100px;top:340px;" width="330" height="335" viewBox="0 0 330 335"><rect x="7" y="9.1" width="316.1" height="317.5" fill="none" stroke="#7000ff" stroke-width="2.1" stroke-dasharray="11.8 4" stroke-dashoffset="5.8"/></svg>
<div class="a" style="left:241.8px;top:329.8px;width:166.2px;height:32.2px;background:#7000ff;border-radius:6px;"></div>
<div class="t" style="left:268.00px;top:338.46px;font-size:16px;line-height:16px;color:#fff;font-weight:bold;transform:scaleX(0.9377);">Attribute details</div>
<svg class="a" style="left:0;top:0" width="1380" height="900"><line x1="493.4" y1="311.4" x2="1322.0" y2="311.4" stroke="#e9e9e9" stroke-width="1.5"/><line x1="493.4" y1="285.2" x2="1322.0" y2="285.2" stroke="#e9e9e9" stroke-width="1.5"/><line x1="493.4" y1="259.0" x2="1322.0" y2="259.0" stroke="#e9e9e9" stroke-width="1.5"/><line x1="493.4" y1="232.8" x2="1322.0" y2="232.8" stroke="#e9e9e9" stroke-width="1.5"/><line x1="493.4" y1="206.6" x2="1322.0" y2="206.6" stroke="#e9e9e9" stroke-width="1.5"/><line x1="493.4" y1="175.7" x2="1322.0" y2="175.7" stroke="#e9e9e9" stroke-width="1.5"/><line x1="523.6" y1="175.7" x2="523.6" y2="311.4" stroke="#e3e3e3" stroke-width="1.2"/><line x1="625.6" y1="175.7" x2="625.6" y2="311.4" stroke="#e3e3e3" stroke-width="1.2"/><line x1="727.6" y1="175.7" x2="727.6" y2="311.4" stroke="#e3e3e3" stroke-width="1.2"/><line x1="829.6" y1="175.7" x2="829.6" y2="311.4" stroke="#e3e3e3" stroke-width="1.2"/><line x1="931.6" y1="175.7" x2="931.6" y2="311.4" stroke="#e3e3e3" stroke-width="1.2"/><line x1="1033.6" y1="175.7" x2="1033.6" y2="311.4" stroke="#e3e3e3" stroke-width="1.2"/><line x1="1135.6" y1="175.7" x2="1135.6" y2="311.4" stroke="#e3e3e3" stroke-width="1.2"/><line x1="1237.6" y1="175.7" x2="1237.6" y2="311.4" stroke="#e3e3e3" stroke-width="1.2"/><line x1="492.9" y1="175.7" x2="492.9" y2="311.4" stroke="#f455f4" stroke-width="1.3"/><line x1="487" y1="311.4" x2="493.4" y2="311.4" stroke="#f455f4" stroke-width="1.4"/><line x1="487" y1="285.2" x2="493.4" y2="285.2" stroke="#f455f4" stroke-width="1.4"/><line x1="487" y1="259.0" x2="493.4" y2="259.0" stroke="#f455f4" stroke-width="1.4"/><line x1="487" y1="232.8" x2="493.4" y2="232.8" stroke="#f455f4" stroke-width="1.4"/><line x1="487" y1="206.6" x2="493.4" y2="206.6" stroke="#f455f4" stroke-width="1.4"/><line x1="487" y1="175.7" x2="493.4" y2="175.7" stroke="#f455f4" stroke-width="1.4"/></svg>
<div class="t" style="left:477.90px;top:306.53px;font-size:10.6px;line-height:10.6px;color:#3a3a3a;">0</div>
<div class="t" style="left:472.01px;top:280.33px;font-size:10.6px;line-height:10.6px;color:#3a3a3a;">10</div>
<div class="t" style="left:472.01px;top:254.13px;font-size:10.6px;line-height:10.6px;color:#3a3a3a;">20</div>
<div class="t" style="left:472.01px;top:227.93px;font-size:10.6px;line-height:10.6px;color:#3a3a3a;">30</div>
<div class="t" style="left:472.01px;top:201.73px;font-size:10.6px;line-height:10.6px;color:#3a3a3a;">40</div>
<div class="t" style="left:463.17px;top:170.83px;font-size:10.6px;line-height:10.6px;color:#3a3a3a;">51.8</div>
<div class="a" style="left:493px;top:143.6px;width:86.2px;height:23.2px;background:#fff;border:1px solid #dcdcdc;border-radius:3px;"></div>
<div class="a" style="left:497.4px;top:150.6px;width:9.2px;height:9.2px;background:#f000f0;border-radius:50%;"></div>
<div class="t" style="left:511.30px;top:149.89px;font-size:11px;line-height:11px;color:#333;transform:scaleX(0.8743);">BA:TEMP.1</div>
<svg class="a" style="left:563.2px;top:148.7px;" width="13" height="13" viewBox="0 0 13 13"><path d="M6.5 1 V12 M1 6.5 H12" stroke="#222" stroke-width="1.2"/><path d="M6.5 0 L4.3 2.6 H8.7 Z M6.5 13 L4.3 10.4 H8.7 Z M0 6.5 L2.6 4.3 V8.7 Z M13 6.5 L10.4 4.3 V8.7 Z" fill="#222"/></svg>
<div class="a" style="left:583.3px;top:143.6px;width:89.5px;height:23.2px;background:#fff;border:1px solid #dcdcdc;border-radius:3px;"></div>
<div class="a" style="left:587.6999999999999px;top:150.6px;width:9.2px;height:9.2px;background:#2e7d12;border-radius:50%;"></div>
<div class="t" style="left:601.60px;top:149.89px;font-size:11px;line-height:11px;color:#333;transform:scaleX(0.8736);">BA:CONC.1</div>
<svg class="a" style="left:656.8px;top:148.7px;" width="13" height="13" viewBox="0 0 13 13"><path d="M6.5 1 V12 M1 6.5 H12" stroke="#222" stroke-width="1.2"/><path d="M6.5 0 L4.3 2.6 H8.7 Z M6.5 13 L4.3 10.4 H8.7 Z M0 6.5 L2.6 4.3 V8.7 Z M13 6.5 L10.4 4.3 V8.7 Z" fill="#222"/></svg>
<svg class="a" style="left:0;top:0" width="1380" height="900"><polyline points="493.4,215.8 495.7,211.6 498.0,206.3 499.9,207.1 501.9,204.6 503.8,206.4 505.7,203.4 507.6,204.6 509.6,203.7 511.5,205.2 513.4,202.4 515.4,203.3 517.3,200.3 519.2,202.9 521.2,199.8 523.1,202.2 525.0,199.3 526.9,200.8 528.9,198.6 530.8,199.5 531.7,199.5 531.9,311.4 533.9,311.4 535.9,311.4 537.9,311.4 539.9,311.4 541.8,311.4 543.8,311.4 545.8,311.4 547.8,311.4 549.8,311.4 551.8,309.4 553.7,303.6 555.7,302.3 557.6,296.5 559.6,294.4 561.5,289.5 563.5,288.3 565.4,283.3 567.4,280.6 569.4,275.5 571.3,274.4 573.3,268.9 575.2,268.0 577.2,262.0 579.1,261.2 581.1,255.6 583.0,254.2 585.0,249.4 586.9,249.9 588.8,246.6 590.7,249.8 592.6,247.2 594.6,247.6 596.5,246.1 598.4,248.2 600.3,244.8 602.2,246.7 604.1,244.1 606.0,245.5 607.9,243.1 609.8,244.3 611.7,241.8 613.7,243.9 615.6,240.3 617.5,243.1 619.4,239.4 621.3,240.8 623.2,237.6 625.1,230.0 627.0,228.2 628.9,222.0 630.9,219.3 632.8,211.7 634.7,210.1 636.6,203.1 638.5,199.5 640.4,200.4 642.4,197.7 644.3,199.4 646.2,195.9 648.1,197.2 650.0,195.6 652.0,197.1 653.9,192.8 655.8,194.5 657.8,191.9 659.7,193.9 661.6,191.9 663.5,192.5 665.4,189.6 667.4,192.4 669.3,190.0 669.5,311.4 671.4,311.4 673.3,311.4 675.2,311.4 677.1,311.4 679.1,311.4 681.0,311.4 682.9,311.4 684.8,311.4 686.7,311.4 688.7,308.4 690.7,303.9 692.7,301.9 694.7,297.2 696.7,295.8 698.7,290.5 700.7,290.2 702.7,284.5 704.7,283.7 706.7,278.3 708.7,275.9 710.7,271.4 712.7,269.4 714.7,265.5 716.7,263.4 718.7,258.4 720.7,256.5 722.7,252.9 724.7,252.8 726.7,250.4 728.7,252.6 730.7,249.5 732.7,252.9 734.7,249.8 736.7,251.4 738.7,248.9 740.7,251.0 742.6,248.0 744.6,250.1 746.6,247.2 748.6,250.1 750.6,246.7 752.6,248.4 754.6,245.6 756.6,247.4 758.6,245.6 760.6,246.0 762.5,242.8 764.4,235.6 766.3,232.7 768.2,226.9 770.1,223.1 772.0,216.6 773.9,213.0 775.8,207.0 777.7,204.4 779.6,198.6 781.6,198.3 783.5,196.0 785.5,197.8 787.4,194.7 789.4,196.4 791.3,193.4 793.2,195.8 795.2,193.4 797.1,193.4 799.1,191.0 801.0,193.8 803.0,190.6 804.9,191.6 806.9,190.0 807.1,311.4 809.2,311.4 811.3,311.4 813.4,311.4 815.5,311.4 817.6,311.4 819.7,311.4 821.8,311.4 823.9,311.4 826.0,311.4 827.9,309.1 829.9,304.1 831.8,302.1 833.7,297.4 835.6,295.4 837.6,290.3 839.5,288.6 841.4,284.0 843.4,282.6 845.3,277.8 847.2,275.6 849.2,270.1 851.1,268.6 853.0,264.1 854.9,262.6 856.9,257.4 858.8,254.6 860.7,254.6 862.6,252.6 864.5,254.5 866.4,252.2 868.3,252.9 870.2,250.8 872.1,252.8 874.0,249.6 875.9,251.8 877.9,249.0 879.8,249.8 881.7,247.2 883.6,249.8 885.5,246.5 887.4,247.6 889.3,246.1 891.2,247.2 893.1,245.0 895.0,245.0 897.0,240.9 899.0,232.9 901.1,229.3 903.1,222.9 905.1,219.4 907.2,211.7 909.2,208.7 911.2,202.0 913.1,202.3 915.1,200.5 917.0,201.1 919.0,198.2 920.9,199.9 922.8,197.9 924.8,199.1 926.7,196.6 928.7,198.0 930.6,194.6 932.6,196.4 934.5,195.2 936.4,196.7 938.4,192.5 940.3,195.7 942.3,192.2 944.2,192.6 944.4,311.4 946.5,311.4 948.6,311.4 950.7,311.4 952.8,311.4 954.9,311.4 957.0,311.4 959.1,311.4 961.2,311.4 963.1,310.2 965.0,304.4 966.9,303.6 968.8,299.1 970.8,298.9 972.7,293.7 974.6,292.9 976.5,288.6 978.4,287.1 980.3,283.2 982.2,281.2 984.1,277.1 986.0,275.9 988.0,271.3 989.9,270.0 991.8,265.6 993.7,265.4 995.6,261.5 997.6,262.9 999.6,258.8 1001.6,262.0 1003.6,258.5 1005.6,259.6 1007.6,257.4 1009.6,259.0 1011.5,257.3 1013.5,259.0 1015.5,256.0 1017.5,257.7 1019.5,254.4 1021.5,257.2 1023.5,254.6 1025.5,255.7 1027.5,254.6 1029.5,251.9 1031.6,245.6 1033.6,243.7 1035.6,237.6 1037.7,234.7 1039.7,229.2 1041.8,227.4 1043.8,221.6 1045.8,219.2 1047.9,212.4 1049.9,209.8 1051.9,210.7 1053.9,206.6 1055.9,207.7 1058.0,205.4 1060.0,207.8 1062.0,205.0 1064.0,205.2 1066.0,203.1 1068.0,204.1 1070.0,201.3 1072.0,202.5 1074.0,199.1 1076.1,200.2 1078.1,198.9 1080.1,198.9 1082.1,197.7 1082.3,311.4 1084.4,311.4 1086.5,311.4 1088.6,311.4 1090.7,311.4 1092.7,311.4 1094.8,311.4 1096.9,311.4 1099.0,311.4 1101.0,308.8 1102.9,305.3 1104.8,304.2 1106.8,298.3 1108.8,297.1 1110.7,293.0 1112.6,291.6 1114.6,287.5 1116.5,285.8 1118.5,281.1 1120.5,280.3 1122.4,275.7 1124.3,273.9 1126.3,269.9 1128.2,268.0 1130.2,263.8 1132.1,263.0 1134.1,258.9 1136.0,259.4 1137.9,257.9 1139.9,258.4 1141.8,256.6 1143.7,258.4 1145.6,255.2 1147.6,257.3 1149.5,254.4 1151.4,257.0 1153.3,254.4 1155.3,255.9 1157.2,253.6 1159.1,255.8 1161.0,253.0 1163.0,255.1 1164.9,252.2 1166.8,252.9 1168.9,249.1 1170.9,243.3 1173.0,241.1 1175.1,235.4 1177.2,232.1 1179.2,226.3 1181.3,224.2 1183.4,216.9 1185.4,214.8 1187.5,209.8 1189.5,211.0 1191.5,207.0 1193.5,208.7 1195.5,206.4 1197.6,207.3 1199.6,204.6 1201.6,207.0 1203.6,203.3 1205.6,206.1 1207.6,202.5 1209.6,204.8 1211.7,201.5 1213.7,202.5 1215.7,200.2 1217.7,201.1 1219.7,200.3 1219.9,311.4 1222.0,311.4 1224.1,311.4 1226.2,311.4 1228.2,311.4 1230.3,311.4 1232.4,311.4 1234.5,311.4 1236.6,311.4 1238.5,309.0 1240.4,304.6 1242.3,303.3 1244.3,300.0 1246.2,297.8 1248.1,293.3 1250.0,292.4 1251.9,289.0 1253.8,287.8 1255.8,283.3 1257.7,282.3 1259.6,277.0 1261.5,276.7 1263.4,271.1 1265.3,270.8 1267.3,265.7 1269.2,264.5 1271.1,261.5 1273.1,262.5 1275.1,259.2 1277.1,261.3 1279.1,258.8 1281.1,260.2 1283.1,256.2 1285.1,257.8 1287.2,256.1 1289.2,257.6 1291.2,254.1 1293.2,255.8 1295.2,254.1 1297.2,254.7 1299.2,252.2 1301.2,252.9 1303.3,249.9 1305.4,243.7 1307.4,240.9 1309.5,235.2 1311.6,232.4 1313.7,226.8 1315.8,223.6 1317.8,218.2 1319.9,216.4 1322.0,210.6" fill="none" stroke="#b9d0aa" stroke-width="1"/><polyline points="493.4,190.8 495.5,199.3 497.7,207.2 499.8,215.9 502.0,223.7 504.1,232.4 506.3,240.3 508.4,248.9 510.6,257.0 512.7,265.7 514.9,273.5 517.0,282.0 519.1,285.9 521.2,288.3 523.3,292.1 525.4,294.6 527.5,298.5 529.6,300.8 531.7,304.5 532.5,311.4 534.7,311.4 536.8,311.4 539.0,311.4 541.1,311.4 543.3,311.4 545.5,311.4 547.6,311.4 549.8,311.4 551.8,305.2 553.8,298.8 555.8,292.7 557.8,286.1 559.9,280.2 561.9,273.7 563.9,267.7 565.9,261.1 567.9,254.9 570.0,255.6 572.1,254.7 574.1,255.0 576.2,254.0 578.3,255.2 580.4,254.6 582.5,255.9 584.5,254.0 586.6,255.3 588.7,253.9 590.8,255.5 592.8,254.2 594.9,255.2 597.0,254.0 599.1,255.6 601.2,253.9 603.2,255.8 605.3,254.5 607.4,255.3 609.5,254.7 611.6,255.1 613.6,254.7 615.7,255.3 617.8,254.9 619.9,245.2 622.1,235.2 624.2,225.5 626.4,215.4 628.5,205.8 630.7,195.6 632.8,186.0 634.8,193.7 636.9,201.1 638.9,208.9 641.0,216.1 643.0,224.0 645.1,231.3 647.1,239.1 649.2,246.5 651.2,254.5 653.3,261.8 655.4,269.6 657.4,277.0 659.4,281.0 661.4,283.8 663.5,288.1 665.5,291.6 667.5,295.5 669.5,299.0 670.3,311.4 672.3,311.4 674.4,311.4 676.5,311.4 678.5,311.4 680.5,311.4 682.6,311.4 684.7,311.4 686.7,311.4 688.7,305.1 690.8,298.2 692.8,291.9 694.8,284.9 696.8,278.8 698.9,271.9 700.9,265.6 702.9,258.9 704.9,259.5 706.9,258.1 708.9,259.1 710.9,258.1 712.9,259.7 714.9,258.0 716.9,259.0 718.9,257.9 720.9,259.1 722.9,258.5 724.9,259.5 726.9,258.0 728.9,259.3 730.9,258.0 732.9,259.5 734.9,258.5 736.9,259.3 738.9,258.6 740.9,259.1 742.9,258.7 744.9,259.6 746.9,257.9 748.9,259.1 750.9,258.8 752.9,258.9 755.0,248.6 757.2,237.6 759.3,227.3 761.5,216.5 763.6,206.1 765.8,195.2 767.9,184.8 770.0,193.5 772.1,201.8 774.3,210.5 776.4,218.7 778.5,227.5 780.6,235.9 782.8,244.8 784.9,253.1 787.0,261.9 789.1,270.0 791.3,278.9 793.4,287.3 795.7,292.5 797.9,296.3 800.2,301.0 802.2,304.9 804.3,307.7 806.3,311.4 808.3,311.4 810.3,311.4 812.3,311.4 814.3,311.4 816.4,311.4 818.4,311.4 820.4,311.4 822.4,311.4 824.4,311.4 826.4,304.5 828.5,297.1 830.5,290.2 832.5,282.8 834.6,276.1 836.6,268.6 838.7,261.8 840.7,254.6 842.7,255.1 844.7,253.8 846.7,255.1 848.7,254.2 850.7,255.1 852.7,254.4 854.7,255.0 856.7,253.6 858.7,255.6 860.7,253.9 862.7,255.1 864.7,254.2 866.7,254.8 868.7,254.3 870.7,255.4 872.7,253.7 874.7,255.0 876.7,253.8 878.7,255.4 880.7,253.9 882.7,255.3 884.7,253.8 886.7,255.0 888.7,253.9 890.7,254.6 892.9,244.3 895.2,233.8 897.4,223.8 899.6,213.0 901.8,203.0 904.1,192.3 906.3,182.2 908.4,190.0 910.4,197.3 912.5,205.1 914.5,212.5 916.6,220.3 918.6,227.7 920.7,235.6 922.8,242.9 924.8,250.8 926.9,258.1 928.9,266.0 931.0,273.5 933.0,278.6 935.0,282.1 937.0,287.9 939.0,291.5 941.0,297.1 943.0,301.0 945.1,311.4 947.1,311.4 949.1,311.4 951.1,311.4 953.2,311.4 955.2,311.4 957.2,311.4 959.2,311.4 961.2,311.4 963.2,305.1 965.3,298.1 967.3,292.0 969.4,284.9 971.4,278.7 973.4,271.9 975.5,265.5 977.5,258.9 979.5,259.8 981.5,258.1 983.5,259.6 985.5,258.5 987.6,260.0 989.6,258.6 991.6,259.7 993.6,258.7 995.6,260.2 997.6,258.9 999.6,260.2 1001.6,259.1 1003.7,260.6 1005.7,259.2 1007.7,260.7 1009.7,259.9 1011.7,260.3 1013.7,259.7 1015.7,260.9 1017.8,260.0 1019.8,261.1 1021.8,259.8 1023.8,260.7 1025.8,260.6 1027.9,251.7 1030.0,242.6 1032.1,233.7 1034.1,224.6 1036.2,215.8 1038.3,206.6 1040.4,197.7 1042.5,205.6 1044.5,213.3 1046.6,221.3 1048.6,228.9 1050.7,237.0 1052.7,244.5 1054.8,252.5 1056.8,260.1 1058.9,268.1 1060.9,275.8 1063.0,283.8 1065.0,291.5 1067.1,299.4 1069.4,303.6 1071.7,306.7 1074.0,311.4 1076.1,311.4 1078.2,311.4 1080.2,311.4 1082.3,311.4 1084.4,311.4 1086.5,311.4 1088.6,311.4 1090.7,311.4 1092.8,311.4 1094.8,311.4 1096.9,311.4 1099.0,311.4 1101.2,303.9 1103.5,296.1 1105.7,288.7 1108.0,280.8 1110.2,273.4 1112.4,265.5 1114.7,258.1 1116.9,250.3 1118.9,251.3 1121.0,249.5 1123.0,250.8 1125.1,249.5 1127.1,251.0 1129.2,249.9 1131.2,250.5 1133.3,249.7 1135.3,250.9 1137.4,249.3 1139.4,251.3 1141.5,249.7 1143.5,250.7 1145.5,249.4 1147.6,250.4 1149.6,250.1 1151.7,250.9 1153.7,249.6 1155.8,250.5 1157.8,249.6 1159.9,251.2 1161.9,249.9 1164.0,250.8 1166.0,250.3 1168.0,241.1 1170.1,231.7 1172.2,222.8 1174.2,213.1 1176.2,204.2 1178.3,194.5 1180.4,185.6 1182.4,176.2 1184.6,185.0 1186.7,193.3 1188.9,202.4 1191.0,210.8 1193.2,219.7 1195.3,228.1 1197.5,237.1 1199.6,245.6 1201.8,254.5 1203.9,263.0 1206.0,271.9 1208.2,280.4 1210.3,284.6 1212.3,287.7 1214.4,292.4 1216.4,294.9 1218.5,299.4 1220.3,311.4 1222.3,311.4 1224.4,311.4 1226.4,311.4 1228.4,311.4 1230.5,311.4 1232.5,311.4 1234.6,311.4 1236.6,311.4 1238.6,305.1 1240.6,298.6 1242.6,292.6 1244.6,285.9 1246.7,280.0 1248.7,273.5 1250.7,267.3 1252.7,260.9 1254.7,254.6 1256.7,255.6 1258.8,254.2 1260.8,255.2 1262.8,254.1 1264.9,255.3 1266.9,254.0 1269.0,255.4 1271.0,254.4 1273.0,255.4 1275.1,254.2 1277.1,255.2 1279.1,254.2 1281.2,255.0 1283.2,254.0 1285.2,255.1 1287.3,254.2 1289.3,255.4 1291.4,254.0 1293.4,254.7 1295.4,254.3 1297.5,255.1 1299.5,254.6 1301.7,244.9 1303.9,234.4 1306.1,224.8 1308.4,214.7 1310.6,204.9 1312.8,194.7 1315.0,184.8 1317.3,195.0 1319.7,204.7 1322.0,215.0" fill="none" stroke="#fba8fb" stroke-width="1"/></svg>
<svg class="a" style="left:0;top:0" width="1380" height="900"><line x1="493.4" y1="486.2" x2="1322.0" y2="486.2" stroke="#e9e9e9" stroke-width="1.5"/><line x1="493.4" y1="455.7" x2="1322.0" y2="455.7" stroke="#e9e9e9" stroke-width="1.5"/><line x1="493.4" y1="425.3" x2="1322.0" y2="425.3" stroke="#e9e9e9" stroke-width="1.5"/><line x1="493.4" y1="394.8" x2="1322.0" y2="394.8" stroke="#e9e9e9" stroke-width="1.5"/><line x1="493.4" y1="364.3" x2="1322.0" y2="364.3" stroke="#e9e9e9" stroke-width="1.5"/><line x1="493.4" y1="351.2" x2="1322.0" y2="351.2" stroke="#e9e9e9" stroke-width="1.5"/><line x1="523.6" y1="351.2" x2="523.6" y2="486.2" stroke="#e3e3e3" stroke-width="1.2"/><line x1="625.6" y1="351.2" x2="625.6" y2="486.2" stroke="#e3e3e3" stroke-width="1.2"/><line x1="727.6" y1="351.2" x2="727.6" y2="486.2" stroke="#e3e3e3" stroke-width="1.2"/><line x1="829.6" y1="351.2" x2="829.6" y2="486.2" stroke="#e3e3e3" stroke-width="1.2"/><line x1="931.6" y1="351.2" x2="931.6" y2="486.2" stroke="#e3e3e3" stroke-width="1.2"/><line x1="1033.6" y1="351.2" x2="1033.6" y2="486.2" stroke="#e3e3e3" stroke-width="1.2"/><line x1="1135.6" y1="351.2" x2="1135.6" y2="486.2" stroke="#e3e3e3" stroke-width="1.2"/><line x1="1237.6" y1="351.2" x2="1237.6" y2="486.2" stroke="#e3e3e3" stroke-width="1.2"/><line x1="492.9" y1="351.2" x2="492.9" y2="486.2" stroke="#c8005a" stroke-width="1.3"/><line x1="487" y1="486.2" x2="493.4" y2="486.2" stroke="#c8005a" stroke-width="1.4"/><line x1="487" y1="455.7" x2="493.4" y2="455.7" stroke="#c8005a" stroke-width="1.4"/><line x1="487" y1="425.3" x2="493.4" y2="425.3" stroke="#c8005a" stroke-width="1.4"/><line x1="487" y1="394.8" x2="493.4" y2="394.8" stroke="#c8005a" stroke-width="1.4"/><line x1="487" y1="364.3" x2="493.4" y2="364.3" stroke="#c8005a" stroke-width="1.4"/><line x1="487" y1="351.2" x2="493.4" y2="351.2" stroke="#c8005a" stroke-width="1.4"/></svg>
<div class="t" style="left:477.90px;top:481.33px;font-size:10.6px;line-height:10.6px;color:#3a3a3a;">0</div>
<div class="t" style="left:472.01px;top:450.86px;font-size:10.6px;line-height:10.6px;color:#3a3a3a;">10</div>
<div class="t" style="left:472.01px;top:420.39px;font-size:10.6px;line-height:10.6px;color:#3a3a3a;">20</div>
<div class="t" style="left:472.01px;top:389.92px;font-size:10.6px;line-height:10.6px;color:#3a3a3a;">30</div>
<div class="t" style="left:472.01px;top:359.45px;font-size:10.6px;line-height:10.6px;color:#3a3a3a;">40</div>
<div class="t" style="left:463.17px;top:346.33px;font-size:10.6px;line-height:10.6px;color:#3a3a3a;">44.3</div>
<div class="a" style="left:492.7px;top:319.1px;width:60px;height:24px;background:#fff;border:1px solid #dcdcdc;border-radius:3px;"></div>
<div class="a" style="left:497.09999999999997px;top:326.5px;width:9.2px;height:9.2px;background:#c8005a;border-radius:50%;"></div>
<div class="t" style="left:511.00px;top:325.79px;font-size:11px;line-height:11px;color:#333;transform:scaleX(0.8024);">Level</div>
<svg class="a" style="left:536.7px;top:324.6px;" width="13" height="13" viewBox="0 0 13 13"><path d="M6.5 1 V12 M1 6.5 H12" stroke="#222" stroke-width="1.2"/><path d="M6.5 0 L4.3 2.6 H8.7 Z M6.5 13 L4.3 10.4 H8.7 Z M0 6.5 L2.6 4.3 V8.7 Z M13 6.5 L10.4 4.3 V8.7 Z" fill="#222"/></svg>
<svg class="a" style="left:0;top:0" width="1380" height="900"><polyline points="493.3,365.3 495.2,368.9 497.2,371.0 499.1,374.8 501.1,376.7 503.0,380.7 505.0,384.9 507.1,388.3 509.1,393.0 511.1,408.7 513.2,423.8 515.2,439.5 517.3,454.7 520.4,456.8 522.2,461.7 523.9,465.1 525.7,469.9 527.4,472.8 529.2,478.3 530.9,481.2 532.7,486.2 534.5,486.2 536.3,486.2 538.1,486.2 539.9,486.2 541.6,486.2 543.4,486.2 545.2,486.2 547.0,486.2 548.8,486.2 550.5,480.4 552.2,474.3 554.0,468.6 555.7,462.5 557.4,456.8 559.4,449.9 561.4,442.2 563.3,435.5 565.3,427.9 567.3,420.8 569.1,422.2 571.0,421.3 572.8,422.3 574.6,421.3 576.5,423.5 578.3,422.9 580.1,420.1 581.9,416.1 583.7,413.4 585.5,409.4 587.3,406.8 589.2,402.3 591.0,400.2 592.8,395.6 594.6,394.2 596.4,390.0 598.2,387.2 599.9,383.7 601.7,381.7 603.5,378.1 605.3,375.8 607.0,371.4 608.8,369.4 610.8,366.9 612.9,363.9 614.7,364.7 616.5,363.5 618.3,364.5 620.0,362.4 621.8,363.9 623.6,363.3 625.4,363.6 627.2,363.3 628.9,365.8 630.6,366.9 632.4,369.1 634.1,370.3 635.8,373.7 637.5,374.6 639.2,378.5 640.9,381.0 642.6,385.6 644.4,388.1 646.1,392.3 647.8,395.1 649.6,407.5 651.5,419.6 653.3,432.4 655.2,444.4 657.0,456.8 658.8,461.6 660.5,464.5 662.3,469.6 664.1,473.2 665.9,478.8 667.6,481.0 669.4,486.2 671.1,486.2 672.8,486.2 674.5,486.2 676.2,486.2 677.9,486.2 679.6,486.2 681.3,486.2 683.0,486.2 684.7,486.2 686.4,486.2 688.2,479.4 690.1,472.2 691.9,465.8 693.7,458.5 695.5,452.0 697.4,444.8 699.2,438.1 701.0,430.9 702.9,424.4 704.7,417.3 706.5,418.7 708.3,417.7 710.0,418.8 711.8,417.4 713.6,419.7 715.4,419.2 717.4,416.1 719.3,411.6 721.3,409.5 723.3,404.2 725.2,401.4 727.2,397.7 728.9,395.7 730.6,391.5 732.3,389.6 734.1,385.9 735.8,383.8 737.5,380.0 739.2,377.8 740.9,374.0 742.6,372.0 744.3,368.1 746.0,366.2 747.8,362.4 749.5,361.2 751.2,356.9 752.9,355.3 754.6,351.7 756.3,352.3 758.1,351.2 759.8,353.0 761.5,352.2 763.3,354.1 765.0,352.4 766.7,353.8 768.5,352.3 770.2,353.7 772.0,357.0 773.8,358.7 775.5,362.5 777.3,364.2 779.1,368.3 780.9,370.6 782.7,374.6 784.5,376.2 786.2,380.3 788.0,381.1 789.8,385.0 791.6,396.9 793.3,408.4 795.1,420.3 796.8,431.9 798.6,443.7 800.5,448.6 802.5,451.8 804.5,457.9 806.4,461.3 807.4,486.2 809.2,486.2 811.1,486.2 812.9,486.2 814.8,486.2 816.6,486.2 818.5,486.2 820.3,486.2 822.2,486.2 824.0,486.2 825.8,480.3 827.5,474.1 829.3,468.4 831.0,462.1 832.8,456.2 834.6,449.9 836.3,444.4 838.1,438.1 839.8,432.3 841.6,426.1 843.4,427.1 845.2,425.1 847.0,426.7 848.9,424.9 850.7,426.4 852.5,425.1 854.3,426.1 856.1,423.7 857.8,418.7 859.6,417.0 861.4,413.0 863.1,410.1 864.9,406.1 866.7,403.8 868.4,399.6 870.2,397.2 872.0,393.0 873.7,390.9 875.5,387.2 877.2,384.4 879.0,380.3 880.8,378.3 882.5,374.0 884.3,371.5 886.1,367.4 887.8,365.7 889.6,361.5 891.3,362.3 893.1,360.3 894.8,361.7 896.5,360.2 898.3,362.7 900.0,360.7 901.7,362.2 903.5,360.7 905.2,361.5 907.0,365.7 908.9,367.9 910.7,372.0 912.6,374.0 914.4,378.2 916.3,380.3 918.1,385.1 920.0,387.4 921.8,390.9 923.8,403.7 925.7,415.8 927.7,428.6 929.6,440.8 931.6,453.5 933.3,457.7 935.0,461.0 936.7,466.2 938.5,468.9 940.2,474.3 941.9,477.2 943.6,482.9 945.3,486.2 947.1,486.2 948.9,486.2 950.8,486.2 952.6,486.2 954.4,486.2 956.2,486.2 958.1,486.2 959.9,486.2 961.7,486.2 963.5,479.5 965.2,472.1 967.0,465.6 968.7,458.4 970.5,452.0 972.3,444.6 974.0,438.1 975.8,431.0 977.5,424.3 979.3,417.3 981.3,418.5 983.2,417.7 985.2,418.6 987.1,418.3 989.1,419.2 990.9,416.7 992.6,412.5 994.4,410.1 996.2,406.1 998.0,404.3 999.7,399.9 1001.5,397.8 1003.3,393.6 1005.0,392.2 1006.8,387.5 1008.6,386.4 1010.4,381.5 1012.1,379.5 1013.9,375.8 1015.7,373.4 1017.4,369.2 1019.2,367.3 1021.0,363.6 1022.8,361.1 1024.5,357.6 1026.3,354.7 1028.1,355.8 1029.9,353.2 1031.6,355.0 1033.4,353.3 1035.2,354.9 1037.0,353.4 1038.8,354.6 1040.6,353.1 1042.3,354.3 1044.1,353.4 1045.9,353.7 1047.6,357.4 1049.4,359.7 1051.1,363.7 1052.8,365.3 1054.6,369.6 1056.3,372.4 1058.0,376.6 1059.8,378.8 1061.5,382.1 1063.3,394.5 1065.0,406.5 1066.8,419.3 1068.5,431.3 1070.3,443.7 1072.3,447.9 1074.2,451.5 1076.2,456.3 1078.2,459.2 1080.1,465.1 1082.1,468.2 1082.7,486.2 1084.4,486.2 1086.1,486.2 1087.8,486.2 1089.5,486.2 1091.2,486.2 1092.9,486.2 1094.6,486.2 1096.3,486.2 1098.0,486.2 1099.7,486.2 1101.4,479.9 1103.2,472.8 1104.9,466.8 1106.6,459.6 1108.4,453.7 1110.1,446.5 1111.8,440.3 1113.6,433.5 1115.3,427.1 1117.3,427.7 1119.2,426.6 1121.2,428.3 1123.2,427.2 1125.1,429.0 1127.1,428.0 1128.9,425.4 1130.6,421.6 1132.4,419.3 1134.1,415.3 1135.9,413.5 1137.7,409.2 1139.4,407.3 1141.2,403.5 1142.9,401.2 1144.7,397.3 1146.5,394.9 1148.2,391.0 1150.0,388.9 1151.7,384.8 1153.5,383.3 1155.3,379.3 1157.0,377.2 1158.8,373.0 1160.5,371.0 1162.3,367.4 1164.1,368.0 1165.9,365.9 1167.6,367.8 1169.4,365.4 1171.2,366.5 1173.0,365.1 1174.8,366.1 1176.6,365.1 1178.3,365.8 1180.1,364.1 1181.9,364.5 1183.7,368.7 1185.6,370.6 1187.4,375.2 1189.3,376.9 1191.1,381.0 1193.0,383.3 1194.8,387.7 1196.7,389.9 1198.5,393.8 1200.5,406.3 1202.4,418.7 1204.3,431.5 1206.3,443.7 1208.3,449.4 1210.3,454.6 1212.4,460.6 1214.4,465.7 1216.4,471.5 1218.3,479.1 1220.3,486.2 1222.1,486.2 1224.0,486.2 1225.8,486.2 1227.7,486.2 1229.5,486.2 1231.4,486.2 1233.2,486.2 1235.1,486.2 1236.9,486.2 1238.7,480.5 1240.5,474.0 1242.2,468.4 1244.0,462.0 1245.8,456.5 1247.6,450.3 1249.3,444.6 1251.1,438.2 1252.9,432.4 1254.7,432.8 1256.4,431.9 1258.2,433.0 1260.0,432.1 1261.8,433.2 1263.5,431.3 1265.3,432.4 1267.1,429.7 1268.9,425.6 1270.6,423.2 1272.4,419.0 1274.2,416.3 1276.0,411.6 1277.8,409.9 1279.5,404.9 1281.3,403.3 1283.1,398.8 1284.9,396.1 1286.6,392.0 1288.4,390.0 1290.2,385.6 1292.0,383.0 1293.8,378.5 1295.5,376.4 1297.3,372.0 1299.1,369.3 1300.9,370.1 1302.6,368.1 1304.4,369.5 1306.2,369.0 1308.0,370.3 1309.7,368.4 1311.5,369.5 1313.3,369.0 1315.1,369.7 1316.8,368.5 1318.6,369.3 1320.3,374.2 1322.0,377.3" fill="none" stroke="#c8005a" stroke-width="1.3"/></svg>
<svg class="a" style="left:0;top:0" width="1380" height="900"><line x1="493.4" y1="661.6" x2="1322.0" y2="661.6" stroke="#ececec" stroke-width="1.5"/><line x1="523.6" y1="526.2" x2="523.6" y2="661.6" stroke="#e3e3e3" stroke-width="1.2"/><line x1="625.6" y1="526.2" x2="625.6" y2="661.6" stroke="#e3e3e3" stroke-width="1.2"/><line x1="727.6" y1="526.2" x2="727.6" y2="661.6" stroke="#e3e3e3" stroke-width="1.2"/><line x1="829.6" y1="526.2" x2="829.6" y2="661.6" stroke="#e3e3e3" stroke-width="1.2"/><line x1="931.6" y1="526.2" x2="931.6" y2="661.6" stroke="#e3e3e3" stroke-width="1.2"/><line x1="1033.6" y1="526.2" x2="1033.6" y2="661.6" stroke="#e3e3e3" stroke-width="1.2"/><line x1="1135.6" y1="526.2" x2="1135.6" y2="661.6" stroke="#e3e3e3" stroke-width="1.2"/><line x1="1237.6" y1="526.2" x2="1237.6" y2="661.6" stroke="#e3e3e3" stroke-width="1.2"/><polyline points="493.4,661.6 493.4,526.2 531.6,526.2 531.6,661.6 548.4,661.6 548.4,526.2 669.3,526.2 669.3,661.6 686.4,661.6 686.4,526.2 807.2,526.2 807.2,661.6 824.2,661.6 824.2,526.2 944.6,526.2 944.6,661.6 961.5,661.6 961.5,526.2 1082.4,526.2 1082.4,661.6 1099.5,661.6 1099.5,526.2 1220.0,526.2 1220.0,661.6 1236.8,661.6 1236.8,526.2 1322.0,526.2" fill="none" stroke="#a9cadb" stroke-width="1"/><line x1="492.9" y1="526.2" x2="492.9" y2="661.6" stroke="#3f8cb5" stroke-width="1.4"/><line x1="487" y1="526.2" x2="493.4" y2="526.2" stroke="#1a7aa8" stroke-width="1.6"/><line x1="487" y1="661.6" x2="493.4" y2="661.6" stroke="#1a7aa8" stroke-width="1.6"/><line x1="492.9" y1="665.8" x2="1322.0" y2="665.8" stroke="#6e6e6e" stroke-width="2"/><line x1="493.4" y1="665.8" x2="493.4" y2="670" stroke="#6e6e6e" stroke-width="1.2"/><line x1="523.6" y1="665.8" x2="523.6" y2="670" stroke="#6e6e6e" stroke-width="1.2"/><line x1="625.6" y1="665.8" x2="625.6" y2="670" stroke="#6e6e6e" stroke-width="1.2"/><line x1="727.6" y1="665.8" x2="727.6" y2="670" stroke="#6e6e6e" stroke-width="1.2"/><line x1="829.6" y1="665.8" x2="829.6" y2="670" stroke="#6e6e6e" stroke-width="1.2"/><line x1="931.6" y1="665.8" x2="931.6" y2="670" stroke="#6e6e6e" stroke-width="1.2"/><line x1="1033.6" y1="665.8" x2="1033.6" y2="670" stroke="#6e6e6e" stroke-width="1.2"/><line x1="1135.6" y1="665.8" x2="1135.6" y2="670" stroke="#6e6e6e" stroke-width="1.2"/><line x1="1237.6" y1="665.8" x2="1237.6" y2="670" stroke="#6e6e6e" stroke-width="1.2"/><line x1="1322.0" y1="665.8" x2="1322.0" y2="670" stroke="#6e6e6e" stroke-width="1.2"/></svg>
<div class="t" style="left:449.30px;top:520.79px;font-size:11px;line-height:11px;color:#333;transform:scaleX(0.8557);">ACTIVE</div>
<div class="t" style="left:438.90px;top:656.19px;font-size:11px;line-height:11px;color:#333;transform:scaleX(0.8752);">INACTIVE</div>
<div class="a" style="left:492.9px;top:494.4px;width:71.5px;height:24px;background:#fff;border:1px solid #dcdcdc;border-radius:3px;"></div>
<div class="a" style="left:497.29999999999995px;top:501.79999999999995px;width:9.2px;height:9.2px;background:#0a6591;border-radius:50%;"></div>
<div class="t" style="left:511.20px;top:501.09px;font-size:11px;line-height:11px;color:#333;transform:scaleX(0.8557);">ACTIVE</div>
<svg class="a" style="left:548.4px;top:499.9px;" width="13" height="13" viewBox="0 0 13 13"><path d="M6.5 1 V12 M1 6.5 H12" stroke="#222" stroke-width="1.2"/><path d="M6.5 0 L4.3 2.6 H8.7 Z M6.5 13 L4.3 10.4 H8.7 Z M0 6.5 L2.6 4.3 V8.7 Z M13 6.5 L10.4 4.3 V8.7 Z" fill="#222"/></svg>
<div class="t" style="left:508.60px;top:671.29px;font-size:11px;line-height:11px;color:#333;transform:scaleX(0.9620);">09 AM</div>
<div class="t" style="left:610.60px;top:671.29px;font-size:11px;line-height:11px;color:#333;transform:scaleX(0.9620);">10 AM</div>
<div class="t" style="left:712.60px;top:671.29px;font-size:11px;line-height:11px;color:#333;transform:scaleX(0.9878);">11 AM</div>
<div class="t" style="left:814.60px;top:671.29px;font-size:11px;line-height:11px;color:#333;transform:scaleX(0.9436);">12 PM</div>
<div class="t" style="left:916.60px;top:671.29px;font-size:11px;line-height:11px;color:#333;transform:scaleX(0.9436);">01 PM</div>
<div class="t" style="left:1018.60px;top:671.29px;font-size:11px;line-height:11px;color:#333;transform:scaleX(0.9436);">02 PM</div>
<div class="t" style="left:1120.60px;top:671.29px;font-size:11px;line-height:11px;color:#333;transform:scaleX(0.9436);">03 PM</div>
<div class="t" style="left:1222.60px;top:671.29px;font-size:11px;line-height:11px;color:#333;transform:scaleX(0.9436);">04 PM</div>
<div class="a" style="left:493.6px;top:690.2px;width:31px;height:31.2px;background:#fff;border:1px solid #dcdcdc;border-radius:3px;"></div>
<svg class="a" style="left:505px;top:701px;" width="7" height="10" viewBox="0 0 7 10"><polygon points="6,0.5 6,9.5 1,5" fill="#333"/></svg>
<div class="a" style="left:529.4px;top:690.2px;width:124.9px;height:31.2px;background:#fff;border:1px solid #dcdcdc;border-radius:3px;"></div>
<div class="t" style="left:541.80px;top:700.10px;font-size:14.3px;line-height:14.3px;color:#2b2b2b;transform:scaleX(1.0800);">07/05/2024</div>
<svg class="a" style="left:631px;top:697.5px;" width="15" height="16" viewBox="0 0 15 16"><rect x="1" y="2.5" width="13" height="12.5" rx="1" fill="none" stroke="#9a9a9a" stroke-width="1.3"/><path d="M1 6 H14" stroke="#9a9a9a" stroke-width="1.3"/><path d="M4.5 0.5 V3.5 M10.5 0.5 V3.5" stroke="#9a9a9a" stroke-width="1.3"/><rect x="8.5" y="9.5" width="3.5" height="3.5" fill="#9a9a9a"/></svg>
<div class="a" style="left:659.2px;top:690.2px;width:139.2px;height:31.2px;background:#fff;border:1px solid #dcdcdc;border-radius:3px;"></div>
<div class="t" style="left:671.90px;top:700.10px;font-size:14.3px;line-height:14.3px;color:#2b2b2b;transform:scaleX(1.0060);">08:41:58</div>
<svg class="a" style="left:774.1px;top:697.8px;" width="16" height="16" viewBox="0 0 16 16"><circle cx="8" cy="8" r="6.8" fill="none" stroke="#9a9a9a" stroke-width="1.3"/><path d="M8 3.8 V8.3 H11.5" fill="none" stroke="#9a9a9a" stroke-width="1.3"/></svg>
<div class="a" style="left:814.1px;top:690.2px;width:31.6px;height:31.2px;background:#fff;border:1px solid #dcdcdc;border-radius:3px;"></div>
<svg class="a" style="left:820px;top:696px;" width="20" height="20" viewBox="0 0 20 20"><path d="M2.5 2 V18 H18" fill="none" stroke="#555" stroke-width="1.3"/><path d="M3.5 14 Q7 5 17 4.5" fill="none" stroke="#555" stroke-width="1.3"/><path d="M3.5 16.5 Q9 10 17 9" fill="none" stroke="#555" stroke-width="1.2"/><path d="M6 15.5 L17 13" fill="none" stroke="#555" stroke-width="1.1" stroke-dasharray="2 1.5"/></svg>
<div class="a" style="left:850.3px;top:690.2px;width:114.1px;height:31.2px;background:#fff;border:1px solid #dcdcdc;border-radius:3px;"></div>
<div class="a" style="left:933.6px;top:691.2px;width:1px;height:29.2px;background:#dcdcdc;"></div>
<div class="t" style="left:862.60px;top:699.10px;font-size:14.3px;line-height:14.3px;color:#2b2b2b;transform:scaleX(0.9879);">&#177; 8 hours</div>
<svg class="a" style="left:942px;top:697px;" width="14" height="17" viewBox="0 0 14 17"><path d="M3.8 7.5 V5 Q3.8 1.5 7 1.5 Q10.2 1.5 10.2 5 V7.5" fill="none" stroke="#333" stroke-width="1.5"/><rect x="1.8" y="7.5" width="10.4" height="8.5" rx="1.2" fill="none" stroke="#333" stroke-width="1.5"/><rect x="6.2" y="10.2" width="1.6" height="3" fill="#333"/></svg>
<div class="a" style="left:969.4px;top:690.2px;width:31.1px;height:31.2px;background:#fff;border:1px solid #ececec;border-radius:3px;"></div>
<svg class="a" style="left:977px;top:698px;" width="16" height="16" viewBox="0 0 16 16"><path d="M3 8 A5.2 5.2 0 1 0 4.6 4.2" fill="none" stroke="#d0d0d0" stroke-width="1.3"/><path d="M1.5 3 L4.8 4.6 L2.4 7" fill="none" stroke="#d0d0d0" stroke-width="1.2"/><path d="M8.3 5.2 V8.5 L10.5 10" fill="none" stroke="#d0d0d0" stroke-width="1.2"/></svg>
<div class="a" style="left:1016.2px;top:690.2px;width:125.2px;height:31.2px;background:#fff;border:1px solid #dcdcdc;border-radius:3px;"></div>
<div class="t" style="left:1028.90px;top:700.10px;font-size:14.3px;line-height:14.3px;color:#2b2b2b;transform:scaleX(1.0800);">07/05/2024</div>
<svg class="a" style="left:1118.5px;top:697.5px;" width="15" height="16" viewBox="0 0 15 16"><rect x="1" y="2.5" width="13" height="12.5" rx="1" fill="none" stroke="#9a9a9a" stroke-width="1.3"/><path d="M1 6 H14" stroke="#9a9a9a" stroke-width="1.3"/><path d="M4.5 0.5 V3.5 M10.5 0.5 V3.5" stroke="#9a9a9a" stroke-width="1.3"/><rect x="8.5" y="9.5" width="3.5" height="3.5" fill="#9a9a9a"/></svg>
<div class="a" style="left:1146.4px;top:690.2px;width:139.4px;height:31.2px;background:#fff;border:1px solid #dcdcdc;border-radius:3px;"></div>
<div class="t" style="left:1159.10px;top:700.10px;font-size:14.3px;line-height:14.3px;color:#2b2b2b;">16:50:01</div>
<svg class="a" style="left:1261.3px;top:697.8px;" width="16" height="16" viewBox="0 0 16 16"><circle cx="8" cy="8" r="6.8" fill="none" stroke="#9a9a9a" stroke-width="1.3"/><path d="M8 3.8 V8.3 H11.5" fill="none" stroke="#9a9a9a" stroke-width="1.3"/></svg>
<div class="a" style="left:1290.4px;top:690.2px;width:31.1px;height:31.2px;background:#fff;border:1px solid #dcdcdc;border-radius:3px;"></div>
<svg class="a" style="left:1302px;top:701px;" width="7" height="10" viewBox="0 0 7 10"><polygon points="1,0.5 1,9.5 6,5" fill="#333"/></svg>
<svg class="a" style="left:0;top:0" width="1380" height="900"><polyline points="493.40,732.49 495.55,756.70 497.54,732.65 499.77,756.18 501.78,733.52 503.57,758.59 505.46,733.76 507.12,756.22 508.91,732.70 510.54,755.61 512.73,734.63 514.82,758.50 516.69,733.49 518.38,755.74 520.27,732.46 522.53,758.23 524.87,733.36 526.91,757.57 528.90,732.56 530.53,756.00 532.32,734.34 534.08,755.69 536.40,734.26 538.61,756.86 540.79,732.37 542.77,756.12 544.54,734.77 546.85,757.37 548.74,733.35 550.65,755.62 552.56,732.08 554.23,756.45 556.62,733.49 558.62,756.95 560.82,732.67 562.90,756.93 565.00,732.54 566.74,757.56 569.08,733.04 571.16,757.68 572.84,732.20 575.09,756.27 576.99,734.05 579.13,755.90 581.50,733.22 583.89,755.72 585.96,734.65 587.95,757.47 589.75,734.63 591.48,758.39 593.73,734.32 595.71,756.09 597.35,732.77 599.19,757.34 600.92,732.21 602.79,755.90 605.18,734.24 607.16,757.84 609.53,733.58 611.71,758.52 613.48,734.51 615.72,755.96 617.80,733.28 619.86,756.05 621.71,733.60 623.53,756.30 625.14,734.06 627.50,758.53 629.58,733.93 631.86,756.85 633.67,733.22 636.03,755.88 637.74,732.28 639.41,758.52 641.37,732.42 643.67,756.63 645.37,733.62 647.23,757.12 649.00,732.50 650.75,757.47 652.92,733.65 654.55,756.47 656.85,734.32 659.09,758.58 661.06,732.19 663.27,758.07 665.44,732.76 667.59,757.66 669.23,733.17 671.08,755.90 672.91,733.51 674.95,755.76 676.63,733.80 678.64,756.40 681.01,732.93 683.17,757.02 685.22,732.19 687.47,755.67 689.35,732.95 691.75,758.28 693.41,732.22 695.66,756.32 697.62,733.86 699.24,756.67 701.19,733.55 703.10,757.40 704.88,732.15 706.83,757.86 708.99,734.45 711.17,757.23 712.96,733.16 714.95,756.70 717.32,732.26 719.30,757.12 721.48,734.67 723.70,756.72 725.91,734.00 728.20,756.50 730.34,732.74 732.67,757.44 734.77,734.47 737.14,755.63 738.74,732.94 740.59,757.43 742.31,733.66 743.97,757.69 746.33,734.23 748.30,758.28 750.66,734.11 752.43,757.59 754.54,734.04 756.35,755.75 758.21,732.76 760.48,758.14 762.63,732.60 764.71,757.77 766.61,734.82 768.58,757.29 770.68,732.84 772.42,757.45 774.23,732.57 776.60,758.50 778.85,734.80 781.01,758.54 783.02,732.12 785.10,756.50 786.89,732.02 788.93,758.32 790.78,733.36 793.09,757.49 794.80,734.38 797.06,757.01 798.70,732.56 800.62,756.94 802.40,734.41 804.67,755.82 806.98,732.05 809.05,758.36 811.37,734.24 813.57,758.04 815.22,734.45 817.31,756.74 819.28,734.40 821.15,757.79 823.04,732.89 825.14,755.93 826.80,732.20 828.80,756.57 830.56,732.81 832.20,758.49 834.20,734.04 836.32,758.13 838.01,734.79 840.04,757.37 842.19,734.18 844.21,758.37 846.47,732.64 848.10,757.54 850.13,733.88 851.87,756.47 853.86,732.49 856.14,756.18 858.47,734.04 860.24,756.27 862.56,733.60 864.89,755.69 866.80,734.83 869.15,756.22 870.76,733.06 872.85,756.78 875.06,733.94 876.79,755.81 878.82,734.65 880.58,755.61 882.63,734.33 884.82,755.95 886.71,732.25 888.63,758.07 890.66,734.44 892.55,758.21 894.17,733.27 896.24,758.52 898.37,732.63 900.06,755.82 902.08,734.69 904.09,758.23 905.88,733.27 907.99,756.29 910.19,733.95 911.99,757.31 913.90,733.47 915.71,756.99 917.68,732.11 919.93,756.84 922.18,734.21 924.36,755.62 926.26,733.18 927.87,756.61 929.93,733.73 932.33,758.01 934.11,734.20 936.36,757.15 938.01,733.11 940.27,757.10 942.24,733.17 944.34,756.80 946.49,734.60 948.69,757.48 950.49,734.35 952.73,755.82 954.49,734.54 956.80,758.37 958.65,733.90 960.36,756.11 962.18,734.05 964.01,757.95 965.78,733.49 967.95,757.95 970.10,733.01 972.22,757.50 973.97,732.42 975.62,756.51 977.55,732.37 979.85,756.64 981.47,734.17 983.55,757.27 985.55,734.89 987.44,756.69 989.55,733.10 991.43,756.34 993.54,733.37 995.55,757.93 997.78,732.06 999.90,757.24 1001.67,733.76 1003.74,758.34 1005.73,732.50 1007.97,757.62 1009.83,732.65 1011.47,758.04 1013.19,733.87 1015.47,757.94 1017.16,733.60 1018.85,757.38 1021.06,732.61 1023.22,756.98 1024.89,732.73 1026.97,758.31 1028.73,733.73 1030.99,757.04 1033.12,732.03 1034.96,757.65 1037.29,733.07 1039.52,758.50 1041.52,734.67 1043.73,756.86 1045.48,734.78 1047.14,755.71 1049.36,734.16 1051.39,758.11 1053.26,733.99 1055.39,757.43 1057.63,732.16 1059.46,758.33 1061.32,734.38 1063.52,758.15 1065.37,732.34 1067.50,757.27 1069.28,733.12 1071.57,757.32 1073.73,733.88 1075.71,756.93 1077.60,732.60 1079.59,757.69 1081.46,732.56 1083.79,757.32 1085.55,732.10 1087.32,755.99 1089.19,734.00 1090.97,756.65 1092.93,734.21 1094.95,757.47 1096.78,733.78 1099.04,756.53 1101.03,732.99 1103.34,756.06 1105.06,734.04 1107.28,756.57 1109.65,734.64 1111.44,755.61 1113.31,733.14 1115.69,758.10 1117.60,733.88 1119.42,757.80 1121.66,733.84 1123.85,756.23 1126.15,734.68 1128.41,755.66 1130.41,734.10 1132.42,755.69 1134.54,733.29 1136.67,757.72 1138.38,733.16 1140.09,758.59 1141.76,733.36 1143.97,758.45 1146.08,732.33 1148.09,757.71 1150.05,734.14 1151.98,757.42 1154.16,732.35 1156.04,756.49 1158.31,734.94 1160.11,756.72 1161.96,734.11 1164.24,758.19 1166.12,734.81 1168.00,756.70 1170.25,732.84 1172.48,758.59 1174.35,732.50 1176.23,757.96 1177.85,734.41 1179.59,756.88 1181.63,734.55 1183.91,756.74 1185.64,734.28 1187.32,755.81 1189.17,732.76 1190.94,757.41 1193.18,734.56 1195.37,756.41 1197.17,732.96 1199.01,757.30 1201.31,734.99 1202.98,755.71 1205.31,733.38 1207.47,756.25 1209.22,733.85 1211.60,755.96 1213.93,732.25 1216.10,757.14 1218.43,732.50 1220.47,758.24 1222.71,734.17 1224.34,757.67 1226.05,733.91 1228.15,758.41 1230.51,734.90 1232.47,756.88 1234.36,733.82 1236.28,757.28 1238.48,732.56 1240.32,756.31 1242.10,732.21 1244.42,758.12 1246.35,732.94 1248.16,757.54 1250.19,732.35 1252.22,758.45 1253.88,732.61 1255.67,757.58 1257.51,734.51 1259.63,757.18 1261.85,734.06 1263.70,756.75 1265.90,733.60 1268.10,756.70 1270.44,732.79 1272.58,755.67 1274.60,734.72 1276.28,756.43 1278.09,734.25 1280.03,756.99 1281.83,732.77 1284.12,756.67 1286.22,732.35 1288.06,755.70 1289.82,733.61 1291.98,757.07 1294.02,734.91 1296.25,757.89 1298.19,733.26 1300.34,756.58 1302.15,734.08 1304.09,758.55 1305.93,733.13 1307.68,756.59 1310.08,734.79 1312.18,756.03 1314.17,733.76 1316.49,758.42 1318.38,733.12" fill="none" stroke="#5f93b3" stroke-width="1"/><polyline points="493.40,734.87 494.49,758.53 497.04,732.55 498.09,756.65 499.53,734.67 500.77,755.72 502.17,733.80 504.60,756.54 507.02,734.12 507.95,755.96 509.81,732.93 510.98,756.05 512.82,734.81 514.99,755.72 516.80,734.10 518.69,757.82 521.17,732.94 523.34,755.74 525.30,732.43 527.55,756.60 528.72,732.15 530.47,758.50 532.89,733.52 534.62,757.37 536.60,734.75 537.97,757.48 539.81,732.89 541.67,756.97 543.26,734.02 545.01,758.34 547.55,733.07 549.14,757.39 551.57,734.86 553.29,757.40 554.30,734.69 555.44,756.96 556.89,732.98 558.34,758.03 559.26,733.61 561.46,756.66 562.65,734.08 563.59,757.37 565.85,734.76 567.48,756.06 569.18,733.57 571.02,755.63 573.14,733.42 575.22,756.67 576.67,734.35 578.92,756.77 581.37,732.05 583.07,756.70 584.50,732.51 586.53,757.30 587.83,732.13 590.33,757.54 591.38,732.65 592.66,756.00 593.82,732.83 594.83,757.19 596.04,733.03 598.14,755.82 600.40,732.11 601.90,756.05 602.80,732.61 604.49,757.45 606.61,734.15 608.25,757.85 609.49,732.80 610.45,756.60 611.57,734.67 613.52,758.43 615.22,733.81 616.14,757.14 617.04,734.30 617.90,756.70 620.42,734.54 621.67,757.00 622.76,733.03 625.08,756.15 625.94,733.14 627.88,758.07 630.09,734.68 631.88,757.51 634.17,733.54 635.34,757.77 636.46,734.52 638.18,756.51 640.42,734.92 641.59,757.38 643.93,734.29 645.44,756.63 646.62,732.49 647.56,757.46 648.81,733.55 651.30,758.14 653.10,734.59 654.97,757.02 657.13,732.07 659.59,756.54 661.81,734.48 662.83,758.40 663.98,733.51 666.43,755.87 667.98,733.87 670.08,757.60 672.58,734.83 674.67,755.90 676.88,733.96 678.28,757.76 679.53,732.17 681.96,757.70 682.85,732.95 683.87,757.26 685.29,732.53 686.95,757.36 688.40,734.44 689.77,756.98 692.11,734.88 693.60,758.48 696.07,733.54 697.29,758.22 698.54,732.93 699.63,758.45 702.17,734.46 703.21,757.16 705.42,733.51 706.39,757.58 707.89,734.74 709.73,757.22 711.65,732.15 713.67,756.18 715.66,733.08 716.99,758.57 717.98,732.46 719.60,756.27 720.82,733.42 722.75,756.71 723.64,734.76 725.48,757.69 726.74,734.07 729.18,757.59 730.70,733.67 731.85,757.38 734.26,733.67 736.51,757.81 738.84,734.35 740.07,757.01 742.08,733.72 743.95,757.88 745.74,733.06 747.95,757.48 750.47,733.74 751.70,757.35 752.77,734.21 753.70,756.79 755.07,734.33 756.14,756.56 758.20,732.70 759.27,757.48 761.23,732.78 762.09,757.28 764.32,732.47 766.77,757.08 767.89,732.30 769.37,757.17 770.52,732.25 772.22,757.84 773.83,733.35 775.86,756.87 777.10,732.54 779.41,758.45 780.47,732.21 782.72,756.98 785.14,733.88 786.56,757.31 788.66,732.69 790.87,757.38 791.79,733.03 793.60,758.16 795.99,734.78 797.71,755.89 799.73,733.61 800.85,755.74 803.26,733.36 804.77,758.38 806.67,734.56 808.18,757.73 810.07,734.38 811.21,757.75 813.15,732.12 815.39,757.65 817.65,733.36 818.79,758.54 819.83,732.78 821.97,756.22 823.89,732.92 825.87,756.40 827.34,732.24 828.99,757.93 830.16,733.17 831.14,755.91 832.46,734.70 834.57,758.57 836.95,734.43 838.69,755.95 840.35,732.08 841.46,757.67 843.77,734.49 844.82,757.55 845.86,732.69 847.31,757.36 848.41,733.97 849.67,755.93 851.34,733.29 853.49,757.57 854.78,732.37 856.13,757.90 858.23,733.06 860.28,757.77 861.25,732.91 862.77,755.87 863.96,732.63 865.07,757.84 867.55,734.80 868.79,758.45 870.47,733.75 871.51,757.35 873.66,732.00 875.74,756.55 877.92,733.46 879.56,757.04 880.64,733.54 881.90,757.64 882.83,732.48 883.77,756.98 885.02,733.67 886.73,757.90 887.79,733.79 889.80,756.53 891.51,733.74 892.40,757.68 894.61,733.13 895.64,757.34 897.91,732.29 898.95,757.11 901.28,733.17 902.55,756.30 903.56,732.89 905.43,756.05 907.74,732.98 909.04,757.51 910.10,732.82 912.25,755.66 913.56,732.22 915.67,755.70 917.87,733.24 919.99,756.32 922.10,733.48 924.65,756.26 925.90,733.29 926.90,757.48 929.14,733.46 930.88,756.26 931.88,733.06 933.55,757.12 935.56,734.81 937.78,756.96 939.79,733.62 942.32,756.81 944.18,733.19 945.74,756.31 947.22,734.71 949.31,755.73 951.36,733.71 952.84,758.55 954.81,734.25 956.89,756.32 957.80,734.05 959.13,757.43 961.45,733.21 963.10,758.45 964.25,732.63 965.47,757.03 966.40,732.27 967.40,756.40 969.90,734.25 971.62,758.21 973.81,732.39 974.79,757.07 977.10,732.93 979.42,757.60 981.91,734.22 984.23,755.65 986.47,732.59 988.20,756.97 990.28,732.69 992.11,757.75 993.27,733.35 995.49,756.94 996.94,732.68 998.40,757.40 999.71,732.93 1000.95,757.72 1002.94,733.88 1004.86,755.83 1006.84,732.39 1008.38,757.03 1010.49,733.59 1011.50,757.17 1013.47,734.36 1015.07,757.96 1015.98,733.51 1018.11,758.27 1019.85,733.79 1021.65,757.91 1022.65,732.06 1024.02,755.91 1025.59,734.96 1027.84,756.85 1029.44,733.69 1031.71,757.60 1032.83,734.70 1034.75,757.47 1036.28,732.30 1038.10,756.24 1039.79,734.09 1041.90,757.61 1043.83,734.92 1045.90,758.05 1047.88,733.93 1050.04,756.49 1052.44,734.93 1053.65,757.16 1054.58,734.96 1055.61,757.32 1057.51,733.29 1058.65,757.09 1059.88,733.47 1061.94,757.70 1063.55,733.90 1065.31,756.20 1067.67,734.90 1068.80,757.15 1069.85,734.10 1071.38,756.05 1073.05,734.39 1073.95,756.76 1075.50,734.50 1076.53,758.33 1078.55,732.98 1080.14,757.39 1082.66,733.87 1084.93,756.08 1087.24,733.34 1088.58,757.05 1090.95,734.65 1092.61,755.88 1094.76,732.12 1096.69,756.22 1097.61,733.13 1099.56,757.08 1101.31,732.27 1102.60,755.99 1104.05,733.44 1105.90,757.75 1107.46,733.52 1109.78,756.07 1110.93,733.51 1113.06,755.91 1114.81,733.89 1116.76,756.60 1119.13,734.96 1121.67,758.23 1123.73,733.16 1125.06,758.30 1127.46,734.68 1129.21,757.11 1130.41,734.78 1132.54,758.10 1134.37,734.99 1135.67,757.48 1137.13,733.12 1138.18,756.72 1139.45,734.04 1141.10,756.07 1143.22,734.57 1144.33,756.22 1146.50,732.88 1147.35,758.30 1149.51,734.90 1150.47,757.87 1152.01,732.20 1153.95,756.03 1156.23,732.54 1158.63,756.24 1159.74,734.56 1162.17,755.96 1164.30,734.45 1166.06,758.57 1168.06,733.50 1169.17,758.20 1171.52,734.71 1172.46,758.54 1174.49,732.87 1176.82,757.21 1178.88,732.14 1181.05,758.00 1182.63,733.46 1184.04,757.87 1185.65,732.15 1186.76,758.21 1189.07,732.94 1191.59,755.90 1192.72,734.57 1195.25,757.27 1196.92,734.02 1198.60,757.81 1200.70,732.66 1202.20,758.53 1203.60,734.42 1204.69,758.03 1206.21,732.89 1207.07,758.44 1208.26,734.38 1210.43,756.18 1212.46,734.99 1213.75,756.48 1215.36,734.88 1216.97,756.43 1219.14,734.89 1221.29,757.62 1223.24,734.39 1225.69,757.86 1227.78,734.16 1228.90,758.24 1230.70,733.80 1232.11,756.75 1233.21,733.72 1234.97,756.11 1237.05,732.24 1238.84,758.22 1240.59,734.04 1242.64,758.57 1244.39,732.52 1246.10,757.12 1247.78,734.29 1249.14,757.17 1250.41,732.59 1252.33,758.12 1254.54,733.12 1255.58,756.24 1256.47,732.89 1258.43,758.55 1260.47,733.69 1262.98,757.66 1265.24,734.94 1266.94,758.37 1268.37,734.44 1269.22,756.70 1270.96,734.22 1272.44,755.79 1273.48,733.25 1274.85,756.92 1276.07,733.16 1277.68,755.83 1278.58,732.85 1279.68,756.45 1281.85,732.05 1284.03,755.96 1285.66,733.79 1287.86,755.82 1289.09,734.12 1290.08,757.51 1292.48,733.88 1294.23,757.26 1295.86,732.09 1297.66,755.78 1298.71,732.10 1300.63,756.13 1302.21,732.25 1304.15,756.63 1305.40,734.44 1307.17,756.24 1308.42,733.09 1310.40,756.59 1312.69,734.83 1314.76,758.57 1316.41,734.00 1318.58,757.66 1319.53,733.74" fill="none" stroke="#79ad62" stroke-width="0.8"/><polyline points="493.40,734.77 495.37,755.92 496.43,733.78 497.85,757.01 498.97,732.58 500.41,757.94 501.86,732.07 502.93,756.47 504.34,733.54 506.09,757.52 507.12,734.35 508.72,756.63 510.34,734.91 511.70,756.32 513.06,733.72 514.73,757.66 515.80,733.42 517.52,756.83 518.97,733.93 520.14,758.06 521.45,734.45 522.63,758.26 523.71,732.12 524.97,756.88 526.81,732.99 528.17,757.73 529.47,734.33 531.02,757.82 532.11,734.35 533.82,756.11 535.05,733.64 536.99,756.82 538.96,732.50 540.96,758.43 542.37,732.07 544.19,756.54 546.19,734.41 548.16,756.98 550.17,734.25 551.51,755.68 552.88,732.58 553.94,757.20 555.12,734.80 557.09,757.95 558.18,733.59 559.33,756.97 561.16,732.76 562.58,755.90 564.02,733.03 565.93,756.16 567.84,734.06 569.25,756.52 571.10,733.92 572.32,757.71 573.73,734.31 575.29,756.95 577.13,732.33 578.77,757.60 580.33,734.51 581.57,755.75 582.63,733.69 584.17,757.89 585.73,733.41 587.18,756.44 588.16,733.13 589.96,758.17 591.85,732.61 593.54,758.08 594.98,733.27 596.04,756.50 597.52,734.07 599.06,756.93 600.59,732.89 602.51,758.34 604.41,734.59 605.90,756.27 607.59,733.82 608.87,757.64 610.21,732.91 612.19,757.58 613.57,733.26 615.41,757.17 616.96,732.77 618.23,758.33 619.43,732.79 621.30,757.09 622.39,733.39 623.49,756.90 624.93,734.57 626.18,756.05 627.42,734.95 629.06,758.47 630.88,732.83 632.23,758.16 634.09,732.27 635.84,757.41 637.53,732.88 638.58,755.85 640.25,732.51 642.25,755.86 643.41,732.06 645.03,758.18 646.77,733.41 648.49,756.89 650.28,734.46 651.89,756.83 653.20,732.40 654.28,756.03 655.47,733.28 656.78,756.74 658.31,734.58 659.74,757.51 661.40,734.23 663.35,757.66 665.25,734.94 667.26,758.21 668.63,734.32 670.48,758.48 671.87,734.17 673.64,756.99 674.84,733.22 675.88,757.65 677.30,734.47 678.89,757.36 680.13,732.95 681.81,757.26 682.96,734.47 684.54,755.70 686.08,733.87 687.50,756.78 689.44,734.94 691.11,757.31 692.15,734.52 693.54,757.45 694.58,732.10 695.96,755.68 697.71,734.13 699.39,757.78 700.54,733.81 701.58,756.84 703.10,733.63 704.20,758.40 705.67,732.44 707.32,757.67 708.95,734.25 710.56,757.01 711.74,733.04 713.74,757.79 715.02,733.48 716.57,756.23 717.85,734.89 718.85,756.23 720.42,734.70 721.56,756.53 723.53,734.00 724.62,755.84 726.61,732.33 728.46,758.36 729.52,734.39 731.25,755.73 732.89,733.54 734.15,756.88 736.16,733.94 738.06,758.01 739.81,734.20 740.86,756.14 742.02,732.65 743.05,756.61 744.18,734.93 745.15,756.17 746.93,733.71 748.50,756.21 750.14,732.42 751.96,757.54 753.54,733.54 755.47,757.36 757.34,732.25 758.66,756.59 760.27,734.50 761.47,756.19 763.28,732.43 764.40,756.85 766.40,733.84 767.82,757.08 769.65,733.57 771.19,756.82 773.14,734.40 775.00,757.80 776.60,734.47 778.33,755.74 780.27,732.38 781.78,757.53 782.97,733.50 784.97,756.30 786.05,732.74 787.42,755.94 788.87,732.48 790.43,757.86 791.44,733.78 793.46,756.27 795.21,732.46 796.77,756.69 798.54,733.34 799.57,755.82 800.83,734.22 802.29,756.26 803.62,732.28 805.04,757.16 806.85,733.21 808.53,757.47 810.27,732.52 812.17,755.77 813.17,734.58 814.96,756.52 816.05,734.20 817.83,756.72 819.82,734.84 821.46,755.82 822.59,732.89 824.12,757.03 826.09,733.91 827.72,756.74 829.69,733.20 831.44,756.80 832.84,733.02 833.97,758.57 835.30,732.90 836.36,757.14 837.70,734.78 839.50,756.60 841.36,732.82 842.46,756.77 843.67,734.96 845.10,755.94 846.33,732.28 847.96,756.52 849.21,734.78 851.20,756.54 853.21,734.95 854.34,756.41 856.10,734.20 857.43,756.97 859.02,734.55 860.05,757.47 861.36,734.37 862.45,758.41 863.55,732.35 864.98,756.00 866.33,732.30 868.01,757.60 869.58,734.24 871.04,756.40 872.66,734.56 874.44,755.90 876.20,732.85 877.70,756.28 879.50,734.19 881.36,756.13 882.90,733.92 883.92,757.17 885.66,734.74 887.53,757.28 888.74,734.66 890.41,758.03 891.42,734.63 893.00,758.27 895.02,733.76 896.79,756.18 898.03,733.57 899.19,756.76 900.62,734.37 901.72,757.98 903.10,732.00 904.50,755.71 906.38,732.54 908.23,757.92 909.46,733.91 910.74,758.00 911.81,732.53 912.99,755.86 914.00,733.62 915.20,756.44 916.18,733.11 917.93,758.52 919.34,732.98 920.82,756.71 921.88,734.60 923.14,756.28 924.25,732.28 925.43,758.35 926.67,732.42 927.73,756.04 929.26,733.49 930.77,756.17 931.79,732.14 933.47,758.58 934.97,733.87 936.84,758.60 938.24,732.94 939.82,758.50 941.59,734.87 943.14,756.60 944.99,734.53 946.83,757.14 947.89,734.38 949.75,756.50 951.06,734.92 952.69,757.66 954.49,732.67 955.72,755.88 956.75,734.61 958.14,756.88 959.84,734.71 961.05,758.32 962.56,732.67 963.98,758.27 965.05,733.70 966.08,757.80 967.46,732.28 969.28,755.90 970.29,734.42 971.45,756.41 972.49,734.24 974.44,757.82 975.59,733.02 977.47,756.26 978.61,734.71 980.36,755.73 982.36,732.48 984.10,758.53 985.27,733.61 986.49,757.95 987.84,733.38 989.78,756.86 991.34,734.16 992.51,756.19 994.29,734.44 995.74,756.97 996.79,733.38 998.44,755.75 1000.36,733.02 1002.13,756.03 1004.11,734.04 1005.43,755.98 1006.42,733.70 1007.88,755.95 1009.51,732.60 1010.66,758.49 1012.42,734.35 1013.79,757.93 1015.35,732.59 1016.88,757.57 1018.19,734.07 1019.42,757.61 1020.99,734.83 1022.12,757.68 1023.38,732.94 1024.87,756.14 1026.04,734.16 1027.47,756.88 1028.97,733.81 1030.13,756.75 1031.53,734.35 1033.13,757.38 1035.14,732.54 1036.13,758.23 1037.83,732.28 1039.58,758.34 1040.86,733.87 1041.86,757.30 1043.89,734.18 1045.27,755.87 1046.84,734.43 1048.18,757.46 1049.89,734.28 1051.59,758.15 1053.01,732.95 1054.23,758.25 1055.99,732.42 1057.33,758.54 1059.05,733.88 1060.10,755.75 1062.12,734.25 1063.95,756.49 1064.94,732.82 1066.17,758.54 1067.81,733.77 1069.17,756.36 1070.39,732.84 1071.48,757.89 1073.35,733.47 1075.10,756.00 1076.78,733.08 1078.77,758.36 1080.18,734.66 1081.87,757.54 1083.71,734.27 1085.45,757.80 1087.13,733.97 1088.99,757.06 1090.94,734.16 1092.14,756.86 1093.32,733.85 1094.64,755.61 1095.97,734.37 1097.82,757.48 1099.42,732.70 1100.78,757.28 1102.51,733.52 1103.65,756.65 1105.17,733.58 1106.61,756.00 1108.27,733.98 1109.77,757.39 1111.20,734.04 1112.63,758.39 1113.84,732.16 1114.87,757.52 1116.24,733.37 1117.42,757.90 1118.87,732.87 1120.12,757.13 1121.89,732.18 1122.88,757.26 1124.80,733.90 1126.15,755.68 1127.84,734.48 1129.70,758.48 1130.88,734.37 1132.27,755.90 1133.32,734.81 1134.94,757.37 1136.79,733.61 1138.25,758.05 1140.05,732.44 1141.34,758.34 1142.33,732.89 1143.35,757.19 1144.69,732.05 1146.15,757.74 1147.37,733.62 1148.69,758.44 1150.64,734.91 1151.87,756.62 1153.46,732.75 1155.00,757.80 1156.26,733.36 1157.28,757.91 1159.29,734.31 1160.62,755.61 1161.94,734.55 1163.25,755.92 1164.70,734.62 1165.82,757.42 1167.15,734.35 1169.04,758.19 1170.44,732.52 1171.49,758.21 1172.54,732.91 1173.97,755.89 1175.63,734.28 1176.95,757.63 1178.36,732.70 1179.35,757.77 1181.30,732.15 1182.81,757.90 1184.58,732.11 1186.09,756.43 1187.55,732.43 1189.46,758.54 1191.41,734.45 1193.31,756.00 1194.68,733.88 1196.15,756.85 1197.52,734.56 1198.82,756.92 1199.86,732.18 1201.77,757.53 1203.14,734.96 1204.87,758.13 1206.42,733.45 1208.02,757.78 1209.29,734.83 1210.89,756.95 1212.59,734.26 1213.75,756.25 1215.24,732.45 1216.54,755.63 1218.41,734.71 1219.91,756.69 1221.30,734.20 1222.84,757.53 1224.84,733.50 1225.85,756.16 1226.93,732.84 1228.38,757.97 1229.83,733.32 1231.36,756.64 1233.05,732.15 1234.28,758.25 1235.60,733.37 1237.47,758.56 1239.30,732.47 1241.05,756.05 1243.06,733.73 1244.09,757.74 1245.53,734.02 1247.52,755.97 1248.56,732.39 1250.22,757.98 1251.81,733.53 1253.35,757.55 1255.28,732.88 1256.64,758.11 1257.92,732.40 1259.56,758.54 1260.79,734.42 1262.66,757.58 1264.41,734.43 1266.07,756.74 1267.83,732.96 1269.16,757.83 1270.37,733.54 1271.91,758.03 1272.98,732.07 1274.18,758.13 1275.81,734.44 1277.34,756.67 1278.76,732.22 1280.52,756.30 1281.65,732.93 1283.34,756.48 1284.49,733.16 1285.87,756.96 1287.70,732.44 1289.07,755.83 1290.23,732.53 1292.03,756.73 1293.51,733.38 1294.55,756.68 1295.80,733.32 1297.75,757.11 1299.14,733.06 1300.42,756.75 1302.14,732.35 1303.12,757.42 1304.27,733.80 1305.42,757.09 1306.89,734.92 1308.20,757.81 1309.53,733.98 1310.76,757.87 1312.48,733.59 1313.53,756.06 1314.64,732.89 1316.19,757.23 1317.96,732.44 1319.63,758.06" fill="none" stroke="#d35fc0" stroke-width="0.9"/><polyline points="493.40,758.60 493.40,731.00 507.54,731.00 507.54,758.60 509.99,758.60 509.99,731.00 532.63,731.00 532.63,758.60 534.92,758.60 534.92,731.00 550.06,731.00 550.06,758.60 552.56,758.60 552.56,731.00 561.89,731.00 561.89,758.60 564.26,758.60 564.26,731.00 581.59,731.00 581.59,758.60 584.44,758.60 584.44,731.00 592.14,731.00 592.14,758.60 594.15,758.60 594.15,731.00 601.78,731.00 601.78,758.60 604.66,758.60 604.66,731.00 623.14,731.00 623.14,758.60 624.71,758.60 624.71,731.00 648.39,731.00 648.39,758.60 651.53,758.60 651.53,731.00 669.30,731.00 669.30,758.60 671.85,758.60 671.85,731.00 680.68,731.00 680.68,758.60 682.21,758.60 682.21,731.00 697.72,731.00 697.72,758.60 699.32,758.60 699.32,731.00 708.75,731.00 708.75,758.60 710.66,758.60 710.66,731.00 717.20,731.00 717.20,758.60 719.49,758.60 719.49,731.00 733.42,731.00 733.42,758.60 736.35,758.60 736.35,731.00 751.69,731.00 751.69,758.60 754.28,758.60 754.28,731.00 769.28,731.00 769.28,758.60 771.90,758.60 771.90,731.00 786.14,731.00 786.14,758.60 788.11,758.60 788.11,731.00 812.07,731.00 812.07,758.60 815.26,758.60 815.26,731.00 836.38,731.00 836.38,758.60 839.09,758.60 839.09,731.00 850.76,731.00 850.76,758.60 852.65,758.60 852.65,731.00 863.85,731.00 863.85,758.60 865.47,758.60 865.47,731.00 885.27,731.00 885.27,758.60 887.45,758.60 887.45,731.00 908.69,731.00 908.69,758.60 910.84,758.60 910.84,731.00 934.09,731.00 934.09,758.60 937.03,758.60 937.03,731.00 943.04,731.00 943.04,758.60 944.89,758.60 944.89,731.00 967.28,731.00 967.28,758.60 969.58,758.60 969.58,731.00 993.23,731.00 993.23,758.60 995.40,758.60 995.40,731.00 1002.72,731.00 1002.72,758.60 1005.29,758.60 1005.29,731.00 1025.30,731.00 1025.30,758.60 1027.26,758.60 1027.26,731.00 1034.83,731.00 1034.83,758.60 1036.89,758.60 1036.89,731.00 1060.24,731.00 1060.24,758.60 1063.03,758.60 1063.03,731.00 1071.16,731.00 1071.16,758.60 1073.08,758.60 1073.08,731.00 1080.90,731.00 1080.90,758.60 1082.50,758.60 1082.50,731.00 1102.84,731.00 1102.84,758.60 1104.65,758.60 1104.65,731.00 1120.71,731.00 1120.71,758.60 1122.97,758.60 1122.97,731.00 1132.41,731.00 1132.41,758.60 1135.15,758.60 1135.15,731.00 1143.51,731.00 1143.51,758.60 1146.10,758.60 1146.10,731.00 1154.20,731.00 1154.20,758.60 1156.41,758.60 1156.41,731.00 1166.25,731.00 1166.25,758.60 1168.20,758.60 1168.20,731.00 1191.68,731.00 1191.68,758.60 1194.55,758.60 1194.55,731.00 1206.02,731.00 1206.02,758.60 1209.03,758.60 1209.03,731.00 1218.82,731.00 1218.82,758.60 1220.99,758.60 1220.99,731.00 1242.37,731.00 1242.37,758.60 1244.96,758.60 1244.96,731.00 1252.76,731.00 1252.76,758.60 1255.95,758.60 1255.95,731.00 1265.78,731.00 1265.78,758.60 1267.72,758.60 1267.72,731.00 1287.63,731.00 1287.63,758.60 1289.69,758.60 1289.69,731.00 1301.03,731.00 1301.03,758.60 1302.65,758.60 1302.65,731.00 1322.00,731.00" fill="none" stroke="#5a93b4" stroke-width="1.1"/><rect x="1316.8" y="730" width="5" height="17" fill="#222"/><rect x="1318" y="747" width="3" height="24" fill="#999"/><line x1="492.6" y1="774" x2="1322" y2="774" stroke="#6e6e6e" stroke-width="2"/><line x1="492.9" y1="773" x2="492.9" y2="777.5" stroke="#6e6e6e" stroke-width="1.3"/><line x1="598.9" y1="773" x2="598.9" y2="777.5" stroke="#6e6e6e" stroke-width="1.3"/><line x1="739.7" y1="773" x2="739.7" y2="777.5" stroke="#6e6e6e" stroke-width="1.3"/><line x1="881.0" y1="773" x2="881.0" y2="777.5" stroke="#6e6e6e" stroke-width="1.3"/><line x1="1012.7" y1="773" x2="1012.7" y2="777.5" stroke="#6e6e6e" stroke-width="1.3"/><line x1="1153.7" y1="773" x2="1153.7" y2="777.5" stroke="#6e6e6e" stroke-width="1.3"/><line x1="1290.8" y1="773" x2="1290.8" y2="777.5" stroke="#6e6e6e" stroke-width="1.3"/><line x1="1321.4" y1="773" x2="1321.4" y2="777.5" stroke="#6e6e6e" stroke-width="1.3"/></svg>
<div class="t" style="left:589.90px;top:779.29px;font-size:11px;line-height:11px;color:#444;transform:scaleX(0.9202);">Dec</div>
<div class="t" style="left:728.20px;top:779.29px;font-size:11px;line-height:11px;color:#444;transform:scaleX(0.9399);">2024</div>
<div class="t" style="left:872.00px;top:779.29px;font-size:11px;line-height:11px;color:#444;transform:scaleX(0.9496);">Feb</div>
<div class="t" style="left:1002.95px;top:779.29px;font-size:11px;line-height:11px;color:#444;transform:scaleX(1.0293);">Mar</div>
<div class="t" style="left:1144.70px;top:779.29px;font-size:11px;line-height:11px;color:#444;transform:scaleX(1.0515);">Apr</div>
<div class="t" style="left:1281.05px;top:779.29px;font-size:11px;line-height:11px;color:#444;transform:scaleX(0.9383);">May</div>
<div class="a" style="left:493.6px;top:798.4px;width:243.5px;height:23.6px;background:#fff;border:1px solid #dcdcdc;border-radius:3px;"></div>
<div class="a" style="left:633.5px;top:799.4px;width:34.8px;height:21.6px;background:#eaf1f8;"></div>
<div class="a" style="left:526.5px;top:799px;width:1px;height:22px;background:#dcdcdc;"></div>
<div class="a" style="left:562.4px;top:799px;width:1px;height:22px;background:#dcdcdc;"></div>
<div class="a" style="left:598.6px;top:799px;width:1px;height:22px;background:#dcdcdc;"></div>
<div class="a" style="left:633.5px;top:799px;width:1px;height:22px;background:#dcdcdc;"></div>
<div class="a" style="left:668.3px;top:799px;width:1px;height:22px;background:#dcdcdc;"></div>
<div class="a" style="left:699.3px;top:799px;width:1px;height:22px;background:#dcdcdc;"></div>
<div class="t" style="left:501.74px;top:804.00px;font-size:13px;line-height:13px;color:#333;">1D</div>
<div class="t" style="left:534.70px;top:804.00px;font-size:13px;line-height:13px;color:#333;">1W</div>
<div class="t" style="left:571.47px;top:804.00px;font-size:13px;line-height:13px;color:#333;">1M</div>
<div class="t" style="left:607.02px;top:804.00px;font-size:13px;line-height:13px;color:#333;">3M</div>
<div class="t" style="left:641.87px;top:804.00px;font-size:13px;line-height:13px;color:#1a6ac0;">6M</div>
<div class="t" style="left:675.85px;top:804.00px;font-size:13px;line-height:13px;color:#333;">1Y</div>
<div class="t" style="left:706.63px;top:804.00px;font-size:13px;line-height:13px;color:#333;">ALL</div>
<div class="a" style="left:754.4px;top:798.4px;width:102.7px;height:23.6px;background:#fff;border:1px solid #dcdcdc;border-radius:3px;"></div>
<div class="a" style="left:834.6px;top:799px;width:1px;height:22px;background:#dcdcdc;"></div>
<div class="t" style="left:762.60px;top:804.00px;font-size:13px;line-height:13px;color:#333;transform:scaleX(0.9002);">CUSTOM</div>
<svg class="a" style="left:820px;top:806px;" width="8" height="5" viewBox="0 0 8 5"><polygon points="0,4.5 7.5,4.5 3.75,0.5" fill="#999"/></svg>
<svg class="a" style="left:839px;top:804px;" width="13" height="12" viewBox="0 0 13 12"><rect x="0.7" y="0.7" width="11.6" height="10.6" rx="1" fill="none" stroke="#666" stroke-width="1.1"/><path d="M3 4 V3 H4 M9 3 H10 V4 M10 8 V9 H9 M4 9 H3 V8" fill="none" stroke="#666" stroke-width="1"/></svg>
</body></html>
